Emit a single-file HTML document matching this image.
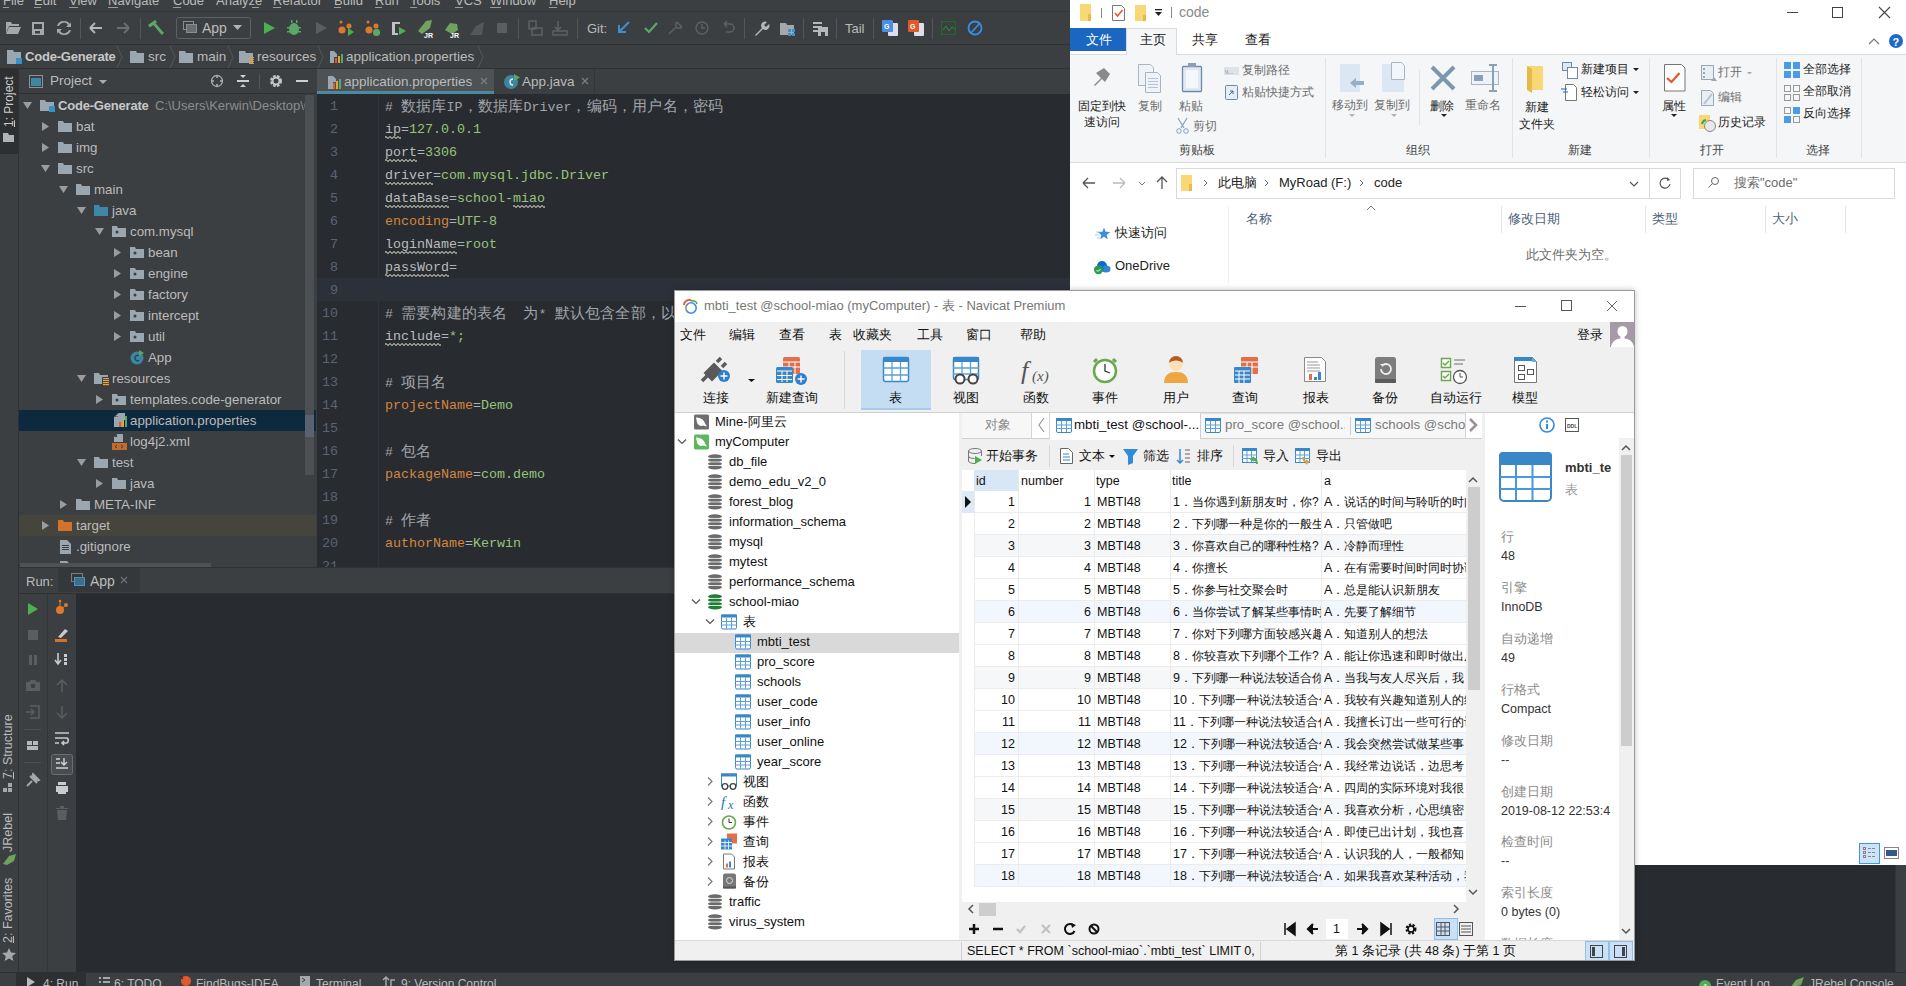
<!DOCTYPE html>
<html><head><meta charset="utf-8">
<style>
*{box-sizing:border-box}
html,body{margin:0;padding:0;width:1906px;height:986px;overflow:hidden;background:#3c3f41;font-family:"Liberation Sans",sans-serif;}
.a{position:absolute}
.t{position:absolute;white-space:pre;line-height:1}
/* IntelliJ */
#ij{position:absolute;left:0;top:0;width:1906px;height:986px;background:#3c3f41;color:#bbbbbb;font-size:13px}
.mono{font-family:"Liberation Mono",monospace}
.c12{font-size:12px}
.cj{font-size:15px;letter-spacing:0.2px}
.wv{background-image:linear-gradient(45deg,transparent 35%,#8e9188 35%,#8e9188 65%,transparent 65%),linear-gradient(135deg,transparent 35%,#8e9188 35%,#8e9188 65%,transparent 65%);background-size:4px 3px;background-repeat:repeat-x;background-position:0 14px,2px 14px;padding-bottom:2px}
</style></head><body>
<div id="ij">
<!-- menu -->
<div class="a" style="left:0;top:0;width:1070px;height:12px;background:#3c3f41;border-bottom:1px solid #333537"></div>
<div class="a" style="left:3px;top:-6px;font-size:13px;color:#bbb;line-height:13px"><span style="position:absolute;left:0px;top:0;white-space:pre">File</span><span style="position:absolute;left:31px;top:0;white-space:pre">Edit</span><span style="position:absolute;left:66px;top:0;white-space:pre">View</span><span style="position:absolute;left:105px;top:0;white-space:pre">Navigate</span><span style="position:absolute;left:170px;top:0;white-space:pre">Code</span><span style="position:absolute;left:213px;top:0;white-space:pre">Analyze</span><span style="position:absolute;left:270px;top:0;white-space:pre">Refactor</span><span style="position:absolute;left:331px;top:0;white-space:pre">Build</span><span style="position:absolute;left:372px;top:0;white-space:pre">Run</span><span style="position:absolute;left:407px;top:0;white-space:pre">Tools</span><span style="position:absolute;left:452px;top:0;white-space:pre">VCS</span><span style="position:absolute;left:487px;top:0;white-space:pre">Window</span><span style="position:absolute;left:546px;top:0;white-space:pre">Help</span></div>
<div class="a" style="left:3px;top:7px;width:1px;height:1px"><span class="a" style="left:0px;top:0;width:6px;height:1px;background:#9a9a9a"></span><span class="a" style="left:31px;top:0;width:7px;height:1px;background:#9a9a9a"></span><span class="a" style="left:66px;top:0;width:9px;height:1px;background:#9a9a9a"></span><span class="a" style="left:105px;top:0;width:10px;height:1px;background:#9a9a9a"></span><span class="a" style="left:170px;top:0;width:8px;height:1px;background:#9a9a9a"></span><span class="a" style="left:249px;top:0;width:7px;height:1px;background:#9a9a9a"></span><span class="a" style="left:270px;top:0;width:8px;height:1px;background:#9a9a9a"></span><span class="a" style="left:331px;top:0;width:7px;height:1px;background:#9a9a9a"></span><span class="a" style="left:372px;top:0;width:7px;height:1px;background:#9a9a9a"></span><span class="a" style="left:407px;top:0;width:7px;height:1px;background:#9a9a9a"></span><span class="a" style="left:452px;top:0;width:8px;height:1px;background:#9a9a9a"></span><span class="a" style="left:487px;top:0;width:11px;height:1px;background:#9a9a9a"></span><span class="a" style="left:546px;top:0;width:8px;height:1px;background:#9a9a9a"></span></div>
<!-- toolbar -->
<div class="a" style="left:0;top:13px;width:1070px;height:32px;background:#3c3f41;border-bottom:1px solid #2f3133"></div>
<svg class="a" style="left:0;top:13px" width="1070" height="31" viewBox="0 13 1070 31">
 <g fill="#a4a8ab">
  <path d="M6 22h5l1 2h7v2H9l-3 7z M9 27h12l-3 7H6z"/>
  <path d="M32 22h12v13H32z M34 24v5h8v-5z M35 31v2.5h5v-2.5z" fill-rule="evenodd"/>
  <path d="M64 21a7 7 0 0 1 6 3l1-2v5h-5l2-2a5 5 0 0 0-9 1h-2a7 7 0 0 1 7-5z M64 35a7 7 0 0 1-6-3l-1 2v-5h5l-2 2a5 5 0 0 0 9-1h2a7 7 0 0 1-7 5z"/>
 </g>
 <rect x="80" y="18" width="1" height="21" fill="#555"/>
 <path d="M90 28h12M90 28l5-5M90 28l5 5" stroke="#b5b8ba" stroke-width="1.8" fill="none"/>
 <path d="M117 28h12M129 28l-5-5M129 28l-5 5" stroke="#6c6f71" stroke-width="1.8" fill="none"/>
 <rect x="140" y="18" width="1" height="21" fill="#555"/>
 <path d="M148 25l7-5 2 2-1.5 1.2 8.5 9.8-2.2 2-8.5-10-3.3 2.6z" fill="#59a869"/>
 <rect x="176.5" y="17.5" width="74" height="21" rx="2" fill="none" stroke="#5e6163"/>
 <g fill="none" stroke="#8a8d90"><rect x="183.5" y="21.5" width="10" height="8"/><rect x="186.5" y="24.5" width="10" height="8" fill="#6b6e70"/></g>
 <path d="M233 25h9l-4.5 5z" fill="#b0b3b5"/><text x="202" y="33" font-size="14" fill="#bbb" font-family="Liberation Sans">App</text>
 <path d="M264 22l11 6-11 6z" fill="#4caf50"/>
 <g fill="#59a869"><ellipse cx="294" cy="29" rx="5" ry="6"/><rect x="287" y="27" width="14" height="1.5"/><rect x="287" y="31" width="14" height="1.5"/><rect x="291" y="20" width="1.5" height="3"/><rect x="296" y="20" width="1.5" height="3"/></g>
 <path d="M316 22l11 6-11 6z" fill="#5b5e60"/>
 <g fill="#e0782c"><circle cx="342" cy="30" r="3.5"/><circle cx="349" cy="26" r="2.5"/><circle cx="341" cy="22" r="1.5"/></g><path d="M348 28l6 4-6 4z" fill="#4caf50"/>
 <g fill="#e0782c"><circle cx="369" cy="30" r="3.5"/><circle cx="376" cy="26" r="2.5"/><circle cx="368" cy="22" r="1.5"/></g><rect x="373" y="29" width="7" height="7" rx="3" fill="#59a869"/>
 <path d="M392 22h8v2h-5v9h3v2h-6z" fill="#bfc2c4"/><path d="M399 27l7 4-7 4z" fill="#4caf50"/>
 <path d="M418 31l8-10 6-1-2 8-8 6z" fill="#6fa35b"/><text x="424" y="38" font-size="7" font-weight="bold" fill="#fff">JR</text>
 <path d="M445 30l5-7 7 1 1 6-6 4z" fill="#6fa35b"/><text x="450" y="38" font-size="7" font-weight="bold" fill="#fff">JR</text>
 <path d="M470 35l6-9 8-4-2 13z" fill="#555758"/>
 <rect x="497" y="23" width="10" height="10" fill="#5b5e60"/>
 <rect x="518" y="18" width="1" height="21" fill="#555"/>
 <path d="M529 21h7v8h-7z M532 28h10v7h-10z" fill="none" stroke="#5e6163" stroke-width="1.5"/>
 <path d="M558 21v9M555 27l3 3 3-3M553 31h14v4h-14z" stroke="#5e6163" stroke-width="1.5" fill="none"/>
 <rect x="577" y="18" width="1" height="21" fill="#555"/>
 <text x="587" y="33" font-size="13" fill="#bbb" font-family="Liberation Sans">Git:</text>
 <path d="M629 22l-10 10M619 25v7h7" stroke="#3d8fd1" stroke-width="2" fill="none"/>
 <path d="M645 28l4 4 8-9" stroke="#59a869" stroke-width="2.2" fill="none"/>
 <path d="M669 34l6-6M677 22l5 5M676 28h6M676 22v6" stroke="#5e6163" stroke-width="1.5" fill="none"/>
 <circle cx="702" cy="28" r="6" fill="none" stroke="#5e6163" stroke-width="1.5"/><path d="M702 24v4h3" stroke="#5e6163" stroke-width="1.5" fill="none"/>
 <path d="M724 24h6a4 4 0 0 1 0 8h-4M724 24l3-3M724 24l3 3" stroke="#5e6163" stroke-width="1.5" fill="none"/>
 <rect x="744" y="18" width="1" height="21" fill="#555"/>
 <path d="M755 35l7-7a4 4 0 0 1 5-6l-3 3 2 2 3-3a4 4 0 0 1-6 5l-7 7z" fill="#b5b8ba"/>
 <path d="M780 23h6l1 2h7v10h-14z" fill="#a4a8ab"/><g fill="#3d8fd1"><rect x="788" y="29" width="3" height="3"/><rect x="792" y="29" width="3" height="3"/><rect x="788" y="33" width="3" height="3"/><rect x="792" y="33" width="3" height="3"/></g>
 <rect x="803" y="18" width="1" height="21" fill="#555"/>
 <g fill="#b5b8ba"><rect x="813" y="22" width="9" height="2"/><rect x="813" y="26" width="9" height="2"/><rect x="813" y="30" width="9" height="2"/><rect x="818" y="27" width="10" height="9"/></g><rect x="821" y="32" width="4" height="4" fill="#3c3f41"/>
 <rect x="836" y="18" width="1" height="21" fill="#555"/>
 <text x="845" y="33" font-size="13" fill="#bbb" font-family="Liberation Sans">Tail</text>
 <rect x="873" y="18" width="1" height="21" fill="#555"/>
 <rect x="888" y="23" width="10" height="13" fill="#dde" rx="1"/><rect x="882" y="20" width="11" height="12" fill="#4a90e2" rx="1"/><text x="884" y="29" font-size="7" fill="#fff" font-weight="bold">G</text>
 <rect x="914" y="23" width="10" height="13" fill="#dde" rx="1"/><rect x="908" y="20" width="11" height="12" fill="#e2582c" rx="1"/><text x="910" y="29" font-size="7" fill="#fff" font-weight="bold">G</text>
 <rect x="932" y="18" width="1" height="21" fill="#555"/>
 <rect x="941.5" y="21.5" width="14" height="13" fill="none" stroke="#1f6b2a"/><path d="M943 30l3-4 3 5 3-4 3 2" stroke="#2d8a3a" fill="none"/>
 <circle cx="975" cy="28" r="6.5" fill="none" stroke="#3a8ee6" stroke-width="1.8"/><path d="M971 33l9-10" stroke="#3a8ee6" stroke-width="1.8"/>
</svg>
<!-- nav bar -->
<div class="a" style="left:0;top:45px;width:1070px;height:24px;background:#3c3f41;border-bottom:1px solid #2f3133"></div>
<svg class="a" style="left:0;top:45px" width="1070" height="24" viewBox="0 45 1070 24">
 <g fill="#9aa7b0"><path d="M7 50h6l1 2h7v12H7z"/></g><rect x="16" y="58" width="6" height="6" fill="#3592c4"/>
 <path d="M117 46l5 11-5 11" stroke="#555" fill="none"/>
 <path d="M130 51h6l1 2h7v10h-14z" fill="#9aa7b0"/>
 <path d="M170 46l5 11-5 11" stroke="#555" fill="none"/>
 <path d="M179 51h6l1 2h7v10h-14z" fill="#9aa7b0"/>
 <path d="M228 46l5 11-5 11" stroke="#555" fill="none"/>
 <path d="M239 51h6l1 2h7v10h-14z" fill="#9aa7b0"/><g fill="#e3a23a"><rect x="249" y="57" width="5" height="1"/><rect x="249" y="59" width="5" height="1"/><rect x="249" y="61" width="5" height="1"/><rect x="249" y="63" width="5" height="1"/></g>
 <path d="M318 46l5 11-5 11" stroke="#555" fill="none"/>
 <path d="M330 51h4v12h-4z M334 51l3 3h-3z M334 54h3v3h-3z" fill="#9aa7b0"/><rect x="335" y="58" width="2" height="5" fill="#e2582c"/><rect x="338" y="56" width="2" height="7" fill="#e3a23a"/><rect x="341" y="54" width="2" height="9" fill="#59a869"/>
 <path d="M478 46l5 11-5 11" stroke="#555" fill="none"/>
</svg>
<div class="t" style="left:25px;top:50px;font-size:13px;font-weight:bold;color:#c8c8c8;letter-spacing:-0.2px">Code-Generate</div>
<div class="t" style="left:148px;top:50px;font-size:13.5px;color:#bbb">src</div>
<div class="t" style="left:197px;top:50px;font-size:13.5px;color:#bbb">main</div>
<div class="t" style="left:257px;top:50px;font-size:13.5px;color:#bbb">resources</div>
<div class="t" style="left:346px;top:50px;font-size:13.5px;color:#bbb">application.properties</div>

<!-- IJ_TOOLBAR -->
<!-- IJ_NAV -->
<!-- PROJ_START --><div class="a" style="left:0;top:69px;width:19px;height:903px;background:#3c3f41;border-right:1px solid #2f3133"></div>
<div class="a" style="left:0;top:69px;width:18px;height:85px;background:#2d2f30"></div>
<div class="a" style="left:3px;top:127px;font-size:12px;color:#ccc;transform-origin:0 0;transform:rotate(-90deg);white-space:pre;line-height:13px"><span style="text-decoration:underline">1</span>: Project</div>
<svg class="a" style="left:3px;top:133px" width="12" height="10"><path d="M0 0h5l1 2h5v7H0z" fill="#aeb3b7"/></svg>
<div class="a" style="left:19px;top:69px;width:297px;height:25px;background:#3c3f41;border-bottom:1px solid #2f3133"></div>
<svg class="a" style="left:19px;top:69px" width="297" height="25" viewBox="19 69 297 25"><rect x="29.5" y="75.5" width="13" height="12" fill="none" stroke="#8d9194"/><rect x="31" y="78" width="10" height="8" fill="#3f87a6"/><path d="M99 80h8l-4 4z" fill="#aaa"/><circle cx="217" cy="81" r="5.5" fill="none" stroke="#a9acaf" stroke-width="1.3"/><rect x="216.2" y="75" width="1.6" height="3" fill="#a9acaf"/><rect x="216.2" y="84" width="1.6" height="3" fill="#a9acaf"/><rect x="211" y="80.2" width="3" height="1.6" fill="#a9acaf"/><rect x="220" y="80.2" width="3" height="1.6" fill="#a9acaf"/><rect x="237" y="80" width="12" height="2" fill="#cdd0d2"/><path d="M240 75h6l-3 3z M240 87h6l-3-3z" fill="#cdd0d2"/><rect x="259" y="74" width="1" height="15" fill="#555"/><circle cx="276" cy="81" r="4.5" fill="none" stroke="#c4c7c9" stroke-width="3" stroke-dasharray="2.4 1.2"/><circle cx="276" cy="81" r="3.5" fill="none" stroke="#c4c7c9" stroke-width="2"/><rect x="296" y="80" width="12" height="2" fill="#cdd0d2"/></svg>
<div class="t" style="left:50px;top:74px;font-size:13.5px;color:#bbb">Project</div>
<div class="a" style="left:19px;top:95px;width:297px;height:472px;background:#3c3f41;overflow:hidden">
<div class="a" style="left:0;top:315px;width:297px;height:21px;background:#0d293e"></div>
<div class="a" style="left:0;top:420px;width:297px;height:21px;background:#45443d"></div>
<svg class="a" style="left:0;top:0" width="297" height="490"><path d="M4 7h9l-4.5 7z" fill="#9a9c9e"/><path d="M21 5h5l1 2h8v9h-14z" fill="#9aa7b0"/><rect x="30" y="11" width="6" height="6" fill="#3592c4"/><path d="M23 27l7 4.5-7 4.5z" fill="#9a9c9e"/><path d="M39 26h5l1 2h8v9h-14z" fill="#9aa7b0"/><path d="M23 48l7 4.5-7 4.5z" fill="#9a9c9e"/><path d="M39 47h5l1 2h8v9h-14z" fill="#9aa7b0"/><path d="M22 70h9l-4.5 7z" fill="#9a9c9e"/><path d="M39 68h5l1 2h8v9h-14z" fill="#9aa7b0"/><path d="M40 91h9l-4.5 7z" fill="#9a9c9e"/><path d="M57 89h5l1 2h8v9h-14z" fill="#9aa7b0"/><path d="M58 112h9l-4.5 7z" fill="#9a9c9e"/><path d="M75 110h5l1 2h8v9h-14z" fill="#3f87a6"/><path d="M76 133h9l-4.5 7z" fill="#9a9c9e"/><path d="M93 131h5l1 2h8v9h-14z" fill="#9aa7b0"/><circle cx="98" cy="137" r="1.5" fill="#3c3f41"/><path d="M95 153l7 4.5-7 4.5z" fill="#9a9c9e"/><path d="M111 152h5l1 2h8v9h-14z" fill="#9aa7b0"/><circle cx="116" cy="158" r="1.5" fill="#3c3f41"/><path d="M95 174l7 4.5-7 4.5z" fill="#9a9c9e"/><path d="M111 173h5l1 2h8v9h-14z" fill="#9aa7b0"/><circle cx="116" cy="179" r="1.5" fill="#3c3f41"/><path d="M95 195l7 4.5-7 4.5z" fill="#9a9c9e"/><path d="M111 194h5l1 2h8v9h-14z" fill="#9aa7b0"/><circle cx="116" cy="200" r="1.5" fill="#3c3f41"/><path d="M95 216l7 4.5-7 4.5z" fill="#9a9c9e"/><path d="M111 215h5l1 2h8v9h-14z" fill="#9aa7b0"/><circle cx="116" cy="221" r="1.5" fill="#3c3f41"/><path d="M95 237l7 4.5-7 4.5z" fill="#9a9c9e"/><path d="M111 236h5l1 2h8v9h-14z" fill="#9aa7b0"/><circle cx="116" cy="242" r="1.5" fill="#3c3f41"/><circle cx="118" cy="263" r="6.5" fill="#3e86a0"/><path d="M120 260.5a2.8 2.8 0 1 0 0 5" stroke="#24475a" stroke-width="1.4" fill="none"/><path d="M120 255l5 3-5 3z" fill="#59a869"/><path d="M58 280h9l-4.5 7z" fill="#9a9c9e"/><path d="M75 278h5l1 2h8v9h-14z" fill="#9aa7b0"/><rect x="83" y="282" width="8" height="9" fill="#3c3f41"/><rect x="84" y="283" width="6" height="1.2" fill="#e3a23a"/><rect x="84" y="285" width="6" height="1.2" fill="#e3a23a"/><rect x="84" y="287" width="6" height="1.2" fill="#e3a23a"/><rect x="84" y="289" width="6" height="1.2" fill="#e3a23a"/><path d="M77 300l7 4.5-7 4.5z" fill="#9a9c9e"/><path d="M93 299h5l1 2h8v9h-14z" fill="#9aa7b0"/><circle cx="98" cy="305" r="1.5" fill="#3c3f41"/><path d="M100 318h6v7h-2v7h-9v-10z" fill="#9aa7b0"/><path d="M95 322l4-4v4z" fill="#3c3f41"/><path d="M96 321.5l3.5-3.5v3.5z" fill="#9aa7b0"/><rect x="100" y="327" width="2" height="5" fill="#e2582c"/><rect x="103" y="324" width="2" height="8" fill="#e3a23a"/><rect x="106" y="321" width="2" height="11" fill="#59a869"/><path d="M98 339h6v8h-9v-5z" fill="#9aa7b0"/><path d="M95 342l3-3v3z" fill="#3c3f41"/><rect x="93" y="348" width="15" height="7" fill="#c46a2c"/><path d="M98 350l-2 1.5 2 1.5M102 350l2 1.5-2 1.5" stroke="#3c3f41" fill="none"/><path d="M58 364h9l-4.5 7z" fill="#9a9c9e"/><path d="M75 362h5l1 2h8v9h-14z" fill="#9aa7b0"/><path d="M77 384l7 4.5-7 4.5z" fill="#9a9c9e"/><path d="M93 383h5l1 2h8v9h-14z" fill="#9aa7b0"/><path d="M41 405l7 4.5-7 4.5z" fill="#9a9c9e"/><path d="M57 404h5l1 2h8v9h-14z" fill="#9aa7b0"/><path d="M23 426l7 4.5-7 4.5z" fill="#9a9c9e"/><path d="M39 425h5l1 2h8v9h-14z" fill="#d2732d"/><path d="M41 445h7l4 4v10h-11z" fill="#9aa7b0"/><g fill="#3c3f41"><rect x="43" y="450" width="7" height="1"/><rect x="43" y="452" width="7" height="1"/><rect x="43" y="454" width="7" height="1"/></g><path d="M41 466h7l4 4v10h-11z" fill="#9aa7b0"/><g fill="#3c3f41"><rect x="43" y="471" width="7" height="1"/><rect x="43" y="473" width="7" height="1"/><rect x="43" y="475" width="7" height="1"/></g></svg>
<div class="t" style="left:39px;top:4px;font-size:13px;font-weight:bold;color:#c8c8c8;letter-spacing:-0.2px">Code-Generate</div>
<div class="t" style="left:136px;top:4px;font-size:13px;color:#8c8c8c">C:\Users\Kerwin\Desktop\C</div>
<div class="t" style="left:57px;top:25px;font-size:13.3px;color:#bbb">bat</div>
<div class="t" style="left:57px;top:46px;font-size:13.3px;color:#bbb">img</div>
<div class="t" style="left:57px;top:67px;font-size:13.3px;color:#bbb">src</div>
<div class="t" style="left:75px;top:88px;font-size:13.3px;color:#bbb">main</div>
<div class="t" style="left:93px;top:109px;font-size:13.3px;color:#bbb">java</div>
<div class="t" style="left:111px;top:130px;font-size:13.3px;color:#bbb">com.mysql</div>
<div class="t" style="left:129px;top:151px;font-size:13.3px;color:#bbb">bean</div>
<div class="t" style="left:129px;top:172px;font-size:13.3px;color:#bbb">engine</div>
<div class="t" style="left:129px;top:193px;font-size:13.3px;color:#bbb">factory</div>
<div class="t" style="left:129px;top:214px;font-size:13.3px;color:#bbb">intercept</div>
<div class="t" style="left:129px;top:235px;font-size:13.3px;color:#bbb">util</div>
<div class="t" style="left:129px;top:256px;font-size:13.3px;color:#bbb">App</div>
<div class="t" style="left:93px;top:277px;font-size:13.3px;color:#bbb">resources</div>
<div class="t" style="left:111px;top:298px;font-size:13.3px;color:#bbb">templates.code-generator</div>
<div class="t" style="left:111px;top:319px;font-size:13.3px;color:#bbb">application.properties</div>
<div class="t" style="left:111px;top:340px;font-size:13.3px;color:#bbb">log4j2.xml</div>
<div class="t" style="left:93px;top:361px;font-size:13.3px;color:#bbb">test</div>
<div class="t" style="left:111px;top:382px;font-size:13.3px;color:#bbb">java</div>
<div class="t" style="left:75px;top:403px;font-size:13.3px;color:#bbb">META-INF</div>
<div class="t" style="left:57px;top:424px;font-size:13.3px;color:#bbb">target</div>
<div class="t" style="left:57px;top:445px;font-size:13.3px;color:#bbb">.gitignore</div>
<div class="t" style="left:57px;top:466px;font-size:13.3px;color:#bbb">LICENSE</div>
<div class="a" style="left:286px;top:0;width:9px;height:380px;background:#4d5052;border-radius:0"></div>
<div class="a" style="left:286px;top:320px;width:9px;height:22px;background:#5a6270"></div>
<div class="a" style="left:1px;top:468px;width:191px;height:7px;background:#4f5254"></div>
</div><!-- PROJ_END -->
<!-- ED_START --><div class="a" style="left:317px;top:69px;width:753px;height:25px;background:#3c3f41"></div>
<div class="a" style="left:317px;top:69px;width:177px;height:25px;background:#4e5254"></div>
<div class="a" style="left:317px;top:91px;width:177px;height:3px;background:#4a8aa0"></div>
<div class="a" style="left:594px;top:69px;width:1px;height:25px;background:#333537"></div>
<svg class="a" style="left:317px;top:69px" width="300" height="25" viewBox="317 69 300 25"><path d="M328 76h5v13h-5z M333 76l3 3h-3z M333 79h3v3h-3z" fill="#9aa7b0"/><rect x="333" y="83" width="2" height="6" fill="#e2582c"/><rect x="336" y="81" width="2" height="8" fill="#e3a23a"/><rect x="339" y="79" width="2" height="10" fill="#59a869"/><path d="M481 78l6 6M487 78l-6 6" stroke="#7d8083" stroke-width="1.2"/><circle cx="511" cy="82" r="7" fill="#3e86a0"/><path d="M513 79a3 3 0 1 0 0 6" stroke="#d8eef5" stroke-width="1.4" fill="none"/><path d="M514 74l6 3.5-6 3.5z" fill="#59a869"/><path d="M582 78l6 6M588 78l-6 6" stroke="#7d8083" stroke-width="1.2"/></svg>
<div class="t" style="left:344px;top:75px;font-size:13.5px;color:#bbb">application.properties</div>
<div class="t" style="left:522px;top:75px;font-size:13.5px;color:#bbb">App.java</div>
<div class="a" style="left:317px;top:94px;width:753px;height:473px;background:#282c30;overflow:hidden">
<div class="a" style="left:61px;top:0;width:1px;height:473px;background:#30343c"></div>
<div class="a" style="left:0;top:184px;width:753px;height:23px;background:#2c3038"></div>
<div class="t mono" style="left:0;width:21px;text-align:right;top:6px;font-size:13.33px;color:#5c6370">1</div>
<div class="t mono" style="left:68px;top:6px;font-size:13.33px;color:#a0a4aa"># <span class="cj">数据库</span>IP<span class="cj">，数据库</span>Driver<span class="cj">，编码，用户名，密码</span></div>
<div class="t mono" style="left:0;width:21px;text-align:right;top:29px;font-size:13.33px;color:#5c6370">2</div>
<div class="t mono" style="left:68px;top:29px;font-size:13.33px;color:#98c379"><span class="wv" style="color:#bbbbbb">ip</span><span style="color:#abb2bf">=</span>127.0.0.1</div>
<div class="t mono" style="left:0;width:21px;text-align:right;top:52px;font-size:13.33px;color:#5c6370">3</div>
<div class="t mono" style="left:68px;top:52px;font-size:13.33px;color:#98c379"><span class="wv" style="color:#bbbbbb">port</span><span style="color:#abb2bf">=</span>3306</div>
<div class="t mono" style="left:0;width:21px;text-align:right;top:75px;font-size:13.33px;color:#5c6370">4</div>
<div class="t mono" style="left:68px;top:75px;font-size:13.33px;color:#98c379"><span class="wv" style="color:#bbbbbb">driver</span><span style="color:#abb2bf">=</span>com.mysql.jdbc.Driver</div>
<div class="t mono" style="left:0;width:21px;text-align:right;top:98px;font-size:13.33px;color:#5c6370">5</div>
<div class="t mono" style="left:68px;top:98px;font-size:13.33px;color:#98c379"><span class="wv" style="color:#bbbbbb">dataBase</span><span style="color:#abb2bf">=</span>school-<span class="wv">miao</span></div>
<div class="t mono" style="left:0;width:21px;text-align:right;top:121px;font-size:13.33px;color:#5c6370">6</div>
<div class="t mono" style="left:68px;top:121px;font-size:13.33px;color:#98c379"><span style="color:#d6843f">encoding</span><span style="color:#abb2bf">=</span>UTF-8</div>
<div class="t mono" style="left:0;width:21px;text-align:right;top:144px;font-size:13.33px;color:#5c6370">7</div>
<div class="t mono" style="left:68px;top:144px;font-size:13.33px;color:#98c379"><span class="wv" style="color:#bbbbbb">loginName</span><span style="color:#abb2bf">=</span>root</div>
<div class="t mono" style="left:0;width:21px;text-align:right;top:167px;font-size:13.33px;color:#5c6370">8</div>
<div class="t mono" style="left:68px;top:167px;font-size:13.33px;color:#98c379"><span class="wv" style="color:#bbbbbb">passWord</span><span style="color:#abb2bf">=</span></div>
<div class="t mono" style="left:0;width:21px;text-align:right;top:190px;font-size:13.33px;color:#5c6370">9</div>
<div class="t mono" style="left:0;width:21px;text-align:right;top:213px;font-size:13.33px;color:#5c6370">10</div>
<div class="t mono" style="left:68px;top:213px;font-size:13.33px;color:#a0a4aa"># <span class="cj">需要构建的表名</span>  <span class="cj">为</span>* <span class="cj">默认包含全部，以</span></div>
<div class="t mono" style="left:0;width:21px;text-align:right;top:236px;font-size:13.33px;color:#5c6370">11</div>
<div class="t mono" style="left:68px;top:236px;font-size:13.33px;color:#98c379"><span class="wv" style="color:#bbbbbb">include</span><span style="color:#abb2bf">=</span>*;</div>
<div class="t mono" style="left:0;width:21px;text-align:right;top:259px;font-size:13.33px;color:#5c6370">12</div>
<div class="t mono" style="left:0;width:21px;text-align:right;top:282px;font-size:13.33px;color:#5c6370">13</div>
<div class="t mono" style="left:68px;top:282px;font-size:13.33px;color:#a0a4aa"># <span class="cj">项目名</span></div>
<div class="t mono" style="left:0;width:21px;text-align:right;top:305px;font-size:13.33px;color:#5c6370">14</div>
<div class="t mono" style="left:68px;top:305px;font-size:13.33px;color:#98c379"><span style="color:#d6843f">projectName</span><span style="color:#abb2bf">=</span>Demo</div>
<div class="t mono" style="left:0;width:21px;text-align:right;top:328px;font-size:13.33px;color:#5c6370">15</div>
<div class="t mono" style="left:0;width:21px;text-align:right;top:351px;font-size:13.33px;color:#5c6370">16</div>
<div class="t mono" style="left:68px;top:351px;font-size:13.33px;color:#a0a4aa"># <span class="cj">包名</span></div>
<div class="t mono" style="left:0;width:21px;text-align:right;top:374px;font-size:13.33px;color:#5c6370">17</div>
<div class="t mono" style="left:68px;top:374px;font-size:13.33px;color:#98c379"><span style="color:#d6843f">packageName</span><span style="color:#abb2bf">=</span>com.demo</div>
<div class="t mono" style="left:0;width:21px;text-align:right;top:397px;font-size:13.33px;color:#5c6370">18</div>
<div class="t mono" style="left:0;width:21px;text-align:right;top:420px;font-size:13.33px;color:#5c6370">19</div>
<div class="t mono" style="left:68px;top:420px;font-size:13.33px;color:#a0a4aa"># <span class="cj">作者</span></div>
<div class="t mono" style="left:0;width:21px;text-align:right;top:443px;font-size:13.33px;color:#5c6370">20</div>
<div class="t mono" style="left:68px;top:443px;font-size:13.33px;color:#98c379"><span style="color:#d6843f">authorName</span><span style="color:#abb2bf">=</span>Kerwin</div>
<div class="t mono" style="left:0;width:21px;text-align:right;top:466px;font-size:13.33px;color:#5c6370">21</div>
</div><!-- ED_END -->
<!-- RUN_START --><div class="a" style="left:19px;top:567px;width:1876px;height:27px;background:#3c3f41;border-top:1px solid #2f3133;border-bottom:1px solid #2f3133"></div>
<div class="a" style="left:58px;top:568px;width:82px;height:24px;background:#35383a"></div>
<div class="t" style="left:26px;top:575px;font-size:13px;color:#bbb">Run:</div>
<div class="t" style="left:90px;top:574px;font-size:14px;color:#bbb">App</div>
<svg class="a" style="left:58px;top:568px" width="82" height="24" viewBox="58 568 82 24"><rect x="71.5" y="573.5" width="11" height="8" fill="none" stroke="#7b7e81"/><rect x="74.5" y="577.5" width="10" height="8" fill="#3c6e8f" stroke="#4a90c0"/><path d="M121 577l6 6M127 577l-6 6" stroke="#6f7275" stroke-width="1.2"/></svg>
<div class="a" style="left:19px;top:594px;width:57px;height:378px;background:#3c3f41"></div>
<div class="a" style="left:47px;top:594px;width:1px;height:378px;background:#333537"></div>
<div class="a" style="left:76px;top:594px;width:1819px;height:378px;background:#282c30"></div>
<div class="a" style="left:1895px;top:0;width:11px;height:972px;background:#3c3f41;border-left:1px solid #333537"></div>
<div class="a" style="left:0;top:972px;width:1906px;height:14px;background:#3c3f41;border-top:1px solid #2f3133"></div>
<div class="a" style="left:16px;top:973px;width:70px;height:13px;background:#2d2f30"></div>
<svg class="a" style="left:0;top:593px" width="1906" height="393" viewBox="0 593 1906 393"><path d="M28 603l10 6-10 6z" fill="#4caf50"/><rect x="28" y="630" width="10" height="10" fill="#5b5e60"/><rect x="29" y="655" width="3" height="10" fill="#5b5e60"/><rect x="34" y="655" width="3" height="10" fill="#5b5e60"/><path d="M26 682h3l2-2h4l2 2h3v9h-14z" fill="#5b5e60"/><circle cx="33" cy="686" r="2.3" fill="#3c3f41"/><path d="M30 706h9v12h-9M26 712h8M31 709l3 3-3 3" stroke="#5b5e60" stroke-width="1.5" fill="none"/><rect x="24" y="729" width="17" height="1" fill="#4f5254"/><rect x="27" y="741" width="5" height="4" fill="#b5b8ba"/><rect x="33" y="741" width="5" height="4" fill="#b5b8ba"/><rect x="27" y="746" width="11" height="4" fill="#b5b8ba"/><rect x="24" y="762" width="17" height="1" fill="#4f5254"/><path d="M27 786l5-5M30 776l7 7M33 774l6 6-3 1-4-4z" stroke="#a4a8ab" stroke-width="1.8" fill="#a4a8ab"/><circle cx="60" cy="610" r="4" fill="#e0782c"/><circle cx="66" cy="605" r="2" fill="#e0782c"/><circle cx="60" cy="601" r="1.3" fill="#e0782c"/><path d="M60 610l6-5M60 610v-8" stroke="#e0782c"/><rect x="55" y="639" width="12" height="3" fill="#d2732d"/><path d="M58 637l7-8 3 2-7 7z" fill="#c8cbcd"/><path d="M58 653v11M55 660l3 4 3-4" stroke="#c8cbcd" stroke-width="1.6" fill="none"/><rect x="64" y="654" width="3" height="3" fill="#c8cbcd"/><rect x="64" y="658" width="3" height="3" fill="#c8cbcd"/><rect x="64" y="662" width="3" height="3" fill="#c8cbcd"/><path d="M62 680v12M57 685l5-5 5 5" stroke="#5b5e60" stroke-width="1.5" fill="none"/><path d="M62 706v12M57 713l5 5 5-5" stroke="#5b5e60" stroke-width="1.5" fill="none"/><path d="M55 733h14M55 738h12a3 3 0 0 1 0 5h-4M64 741l-2 2 2 2M55 743h4" stroke="#c8cbcd" stroke-width="1.6" fill="none"/><rect x="51.5" y="754.5" width="21" height="20" rx="2" fill="#4a4d50" stroke="#6b6e71"/><path d="M56 759h4M56 763h4M56 768h12M64 758v7M61 762l3 3 3-3" stroke="#d0d3d5" stroke-width="1.4" fill="none"/><path d="M56 786h12v6h-12z M58 782h8v3h-8z" fill="#c8cbcd"/><rect x="58" y="790" width="8" height="4" fill="#c8cbcd"/><path d="M57 810h10l-1 10h-8z M56 808h12v1h-12z M60 806h4v2h-4z" fill="#5b5e60"/><rect x="3" y="788" width="4" height="4" fill="#a4a8ab"/><rect x="8" y="783" width="4" height="4" fill="#a4a8ab"/><rect x="8" y="788" width="4" height="4" fill="#a4a8ab"/><path d="M3 864l6-8 7-2-2 7-7 4z" fill="#6fa35b"/><path d="M9 948l2 4.5 5 .5-3.8 3.2 1.2 4.8-4.4-2.6-4.4 2.6 1.2-4.8-3.8-3.2 5-.5z" fill="#a4a8ab"/><path d="M27 977l8 5-8 5z" fill="#bbb"/><g fill="#a4a8ab"><rect x="99" y="977" width="2" height="2"/><rect x="103" y="977" width="7" height="2"/><rect x="99" y="981" width="2" height="2"/><rect x="103" y="981" width="7" height="2"/></g><circle cx="186" cy="981" r="5" fill="#e2582c"/><path d="M180 976l3 3" stroke="#222"/><rect x="300" y="976" width="10" height="10" fill="#a4a8ab"/><path d="M302 978l3 2-3 2" stroke="#3c3f41" fill="none"/><path d="M386 986v-9M383 980l3-3 3 3M391 986v-6h4" stroke="#a4a8ab" stroke-width="1.5" fill="none"/><circle cx="1705" cy="986" r="6" fill="#4caf50"/><text x="1703" y="990" font-size="9" fill="#fff" font-family="Liberation Sans">1</text><path d="M1790 988l6-8 8-3-3 8z" fill="#6fa35b"/></svg>
<div class="t" style="left:1px;top:779px;font-size:12.5px;color:#bbb;transform-origin:0 0;transform:rotate(-90deg);line-height:14px"><span style="text-decoration:underline">7</span>: Structure</div>
<div class="t" style="left:1px;top:852px;font-size:12.5px;color:#bbb;transform-origin:0 0;transform:rotate(-90deg);line-height:14px">JRebel</div>
<div class="t" style="left:1px;top:943px;font-size:12.5px;color:#bbb;transform-origin:0 0;transform:rotate(-90deg);line-height:14px"><span style="text-decoration:underline">2</span>: Favorites</div>
<div class="t" style="left:43px;top:978px;font-size:12px;color:#bbb">4: Run</div>
<div class="t" style="left:114px;top:978px;font-size:12px;color:#bbb">6: TODO</div>
<div class="t" style="left:196px;top:978px;font-size:12px;color:#bbb">FindBugs-IDEA</div>
<div class="t" style="left:316px;top:978px;font-size:12px;color:#bbb">Terminal</div>
<div class="t" style="left:401px;top:978px;font-size:12px;color:#bbb">9: Version Control</div>
<div class="t" style="left:1716px;top:978px;font-size:12px;color:#bbb">Event Log</div>
<div class="t" style="left:1809px;top:978px;font-size:12px;color:#bbb">JRebel Console</div><!-- RUN_END -->
</div>
<!-- EX_START --><div id="ex" class="a" style="left:1070px;top:0;width:836px;height:865px;background:#fff;color:#222;font-size:12px;overflow:hidden">
<!-- title bar -->
<svg class="a" style="left:0;top:0" width="836" height="54" viewBox="1070 0 836 54">
 <path d="M1080 4h11v17h-11z" fill="#f8d775"/><path d="M1088 14h3v7h-3z" fill="#e8b84a"/>
 <rect x="1101" y="8" width="1" height="10" fill="#888"/>
 <path d="M1112.5 5.5h9l3 3v12h-12z" fill="#fff" stroke="#777"/><path d="M1115 13l2.5 3 5-6" stroke="#e2582c" stroke-width="1.5" fill="none"/>
 <path d="M1135 5h11v16h-11z" fill="#f8d775"/><path d="M1143 15h3v6h-3z" fill="#e8b84a"/>
 <rect x="1155" y="9" width="7" height="1.3" fill="#222"/><path d="M1155 12h7l-3.5 4z" fill="#222"/>
 <rect x="1171" y="7" width="1" height="11" fill="#888"/>
 <rect x="1787" y="12" width="11" height="1" fill="#444"/>
 <rect x="1832.5" y="7.5" width="10" height="10" fill="none" stroke="#444"/>
 <path d="M1879 7l11 11M1890 7l-11 11" stroke="#444" stroke-width="1.1"/>
 <path d="M1869 44l5-5 5 5" stroke="#777" fill="none" stroke-width="1.2"/>
 <circle cx="1896" cy="41" r="7" fill="#1e6ac6"/><text x="1892.5" y="45.5" font-size="11" font-weight="bold" fill="#fff" font-family="Liberation Sans">?</text>
</svg>
<div class="t" style="left:109px;top:5px;font-size:14px;color:#8a8a8a">code</div>
<!-- ribbon tabs -->
<div class="a" style="left:0;top:28px;width:56px;height:23px;background:#1a66c0"></div>
<div class="t" style="left:16px;top:34px;font-size:12.5px;color:#fff">文件</div>
<div class="a" style="left:56px;top:28px;width:51px;height:27px;background:#f5f6f7;border:1px solid #dadbdc;border-bottom:none"></div>
<div class="t" style="left:70px;top:34px;font-size:12.5px;color:#222">主页</div>
<div class="t" style="left:122px;top:34px;font-size:12.5px;color:#222">共享</div>
<div class="t" style="left:175px;top:34px;font-size:12.5px;color:#222">查看</div>
<!-- ribbon body -->
<div class="a" style="left:0;top:54px;width:836px;height:109px;background:#f5f6f7;border-top:1px solid #dadbdc;border-bottom:1px solid #dadbdc"></div>
<div class="a" style="left:57px;top:54px;width:49px;height:1px;background:#f5f6f7"></div>
<div class="a" style="left:255px;top:58px;width:1px;height:100px;background:#e2e3e4"></div>
<div class="a" style="left:442px;top:58px;width:1px;height:100px;background:#e2e3e4"></div>
<div class="a" style="left:579px;top:58px;width:1px;height:100px;background:#e2e3e4"></div>
<div class="a" style="left:706px;top:58px;width:1px;height:100px;background:#e2e3e4"></div>
<div class="a" style="left:791px;top:58px;width:1px;height:100px;background:#e2e3e4"></div>
<div class="a" style="left:349px;top:70px;width:1px;height:55px;background:#e2e3e4"></div>
<svg class="a" style="left:0;top:54px" width="836" height="110" viewBox="1070 54 836 110">
 <!-- pin -->
 <path d="M1096 73l8-5 6 6-5 8-3-3-7 7-1-1 7-7z" fill="#8a8a8a"/>
 <!-- copy -->
 <path d="M1138.5 64.5h12l3 3v18h-15z" fill="#eef3fa" stroke="#aab5c3"/><path d="M1145.5 72.5h12l3 3v17h-15z" fill="#eef3fa" stroke="#aab5c3"/>
 <g fill="#b7c3d1"><rect x="1148" y="78" width="10" height="1"/><rect x="1148" y="81" width="10" height="1"/><rect x="1148" y="84" width="10" height="1"/><rect x="1148" y="87" width="10" height="1"/></g>
 <!-- paste -->
 <rect x="1182.5" y="66.5" width="19" height="25" rx="1" fill="#dfe8f3" stroke="#6f8aa8" stroke-width="1.3"/><rect x="1186" y="70" width="12" height="18" fill="#f4f7fb"/><rect x="1188" y="63" width="8" height="4" fill="#8aa0b8"/>
 <!-- scissors -->
 <path d="M1178 118l6 10M1187 118l-6 10" stroke="#8aa0b8" stroke-width="1.2"/><circle cx="1179" cy="131" r="2.3" fill="none" stroke="#8aa0b8"/><circle cx="1186" cy="131" r="2.3" fill="none" stroke="#8aa0b8"/>
 <!-- copy path -->
 <rect x="1224" y="67" width="15" height="8" fill="#dfe3e8"/><text x="1225" y="74" font-size="6" fill="#6d7e92" font-family="Liberation Sans">\\...</text>
 <!-- paste shortcut -->
 <rect x="1225.5" y="85.5" width="12" height="14" rx="1" fill="#e6edf5" stroke="#6f8aa8"/><path d="M1229 95l4-4M1230 91h3v3" stroke="#4b6b8c" fill="none"/>
 <!-- move to -->
 <rect x="1340" y="64" width="20" height="28" fill="#dbe7f3"/><path d="M1350 83l6-5v3h8v4h-8v3z" fill="#97aec6"/>
 <rect x="1382" y="64" width="22" height="28" fill="#dbe7f3"/><path d="M1391.5 62.5h10l3 3v14h-13z" fill="#f2f5f9" stroke="#aab5c3"/>
 <path d="M1349 114h6l-3 3z M1391 114h6l-3 3z" fill="#a8b4bf"/>
 <!-- delete X -->
 <path d="M1432 67l22 22M1454 67l-22 22" stroke="#7d97b1" stroke-width="4"/>
 <path d="M1441 114h6l-3 3z" fill="#222"/>
 <!-- rename -->
 <rect x="1471.5" y="71.5" width="27" height="13" fill="#eef3fa" stroke="#aab5c3"/><rect x="1474" y="75" width="9" height="6" fill="#8aa0b8"/><path d="M1489 65h8M1493 65v26M1489 91h8" stroke="#8aa0b8" stroke-width="2"/>
 <!-- new folder -->
 <path d="M1527 66h16v24h-16z" fill="#f8d775"/><path d="M1527 66l5 3v24l-5-3z" fill="#e8b84a"/>
 <!-- new item -->
 <rect x="1562.5" y="62.5" width="9" height="8" fill="#dfe8f3" stroke="#6f8aa8"/><rect x="1567.5" y="67.5" width="10" height="11" fill="#fff" stroke="#6f8aa8"/>
 <path d="M1633 68h6l-3 3z M1633 91h6l-3 3z" fill="#222"/>
 <!-- easy access -->
 <path d="M1565.5 84.5h8l3 3v13h-11z" fill="#fff" stroke="#777"/><path d="M1561 89h6M1563 92h5" stroke="#1e6ac6" stroke-width="1.2"/>
 <!-- properties -->
 <path d="M1664.5 64.5h17l3.5 3.5v23h-20.5z" fill="#fff" stroke="#777"/><path d="M1667 78l4.5 4 8-9" stroke="#e2582c" stroke-width="2.2" fill="none"/>
 <path d="M1671 114h6l-3 3z" fill="#222"/>
 <!-- open -->
 <rect x="1701.5" y="65.5" width="12" height="14" fill="#e9eef4" stroke="#9aa8b6"/><g fill="#9aa8b6"><rect x="1703" y="68" width="2" height="2"/><rect x="1703" y="72" width="2" height="2"/><rect x="1703" y="76" width="2" height="2"/></g><path d="M1711 81l3-4 3 4z" fill="#9aa8b6"/>
 <path d="M1747 72h5l-2.5 2.5z" fill="#aaa"/>
 <path d="M1701.5 90.5h9l3 3v12h-12z" fill="#e9eef4" stroke="#9aa8b6"/><path d="M1704 104l8-10" stroke="#b6c3d0" stroke-width="2"/>
 <rect x="1699" y="115" width="11" height="14" fill="#f8d775"/><circle cx="1710" cy="126" r="5.5" fill="#e8e8e8" stroke="#888"/><path d="M1702 124a5 5 0 0 1 4-4" stroke="#3aa655" stroke-width="2" fill="none"/>
 <!-- select all -->
 <g fill="#4a9be8"><rect x="1784" y="62" width="7" height="7"/><rect x="1793" y="62" width="7" height="7"/><rect x="1784" y="71" width="7" height="7"/><rect x="1793" y="71" width="7" height="7"/></g>
 <g fill="none" stroke="#999"><rect x="1784.5" y="85.5" width="6" height="6"/><rect x="1793.5" y="85.5" width="6" height="6"/><rect x="1784.5" y="94.5" width="6" height="6"/><rect x="1793.5" y="94.5" width="6" height="6"/></g>
 <g fill="none" stroke="#999"><rect x="1784.5" y="107.5" width="6" height="6"/><rect x="1793.5" y="116.5" width="6" height="6"/></g><g fill="#4a9be8"><rect x="1793" y="107" width="7" height="7"/><rect x="1784" y="116" width="7" height="7"/></g>
</svg>
<div class="t" style="left:8px;top:98px;font-size:12px;line-height:16px;text-align:center;width:48px">固定到快<br>速访问</div>
<div class="t" style="left:68px;top:100px;font-size:12px;color:#6d6d6d">复制</div>
<div class="t" style="left:109px;top:100px;font-size:12px;color:#6d6d6d">粘贴</div>
<div class="t" style="left:123px;top:120px;font-size:12px;color:#6d6d6d">剪切</div>
<div class="t" style="left:172px;top:64px;font-size:12px;color:#6d6d6d">复制路径</div>
<div class="t" style="left:172px;top:86px;font-size:12px;color:#6d6d6d">粘贴快捷方式</div>
<div class="t" style="left:109px;top:144px;font-size:12px;color:#444">剪贴板</div>
<div class="t" style="left:262px;top:99px;font-size:12px;color:#6d6d6d">移动到</div>
<div class="t" style="left:304px;top:99px;font-size:12px;color:#6d6d6d">复制到</div>
<div class="t" style="left:360px;top:100px;font-size:12px;color:#222">删除</div>
<div class="t" style="left:395px;top:99px;font-size:12px;color:#6d6d6d">重命名</div>
<div class="t" style="left:336px;top:144px;font-size:12px;color:#444">组织</div>
<div class="t" style="left:455px;top:99px;font-size:12px;line-height:17px;text-align:center;width:24px">新建<br><span style="position:relative;left:-6px">文件夹</span></div>
<div class="t" style="left:511px;top:63px;font-size:12px">新建项目</div>
<div class="t" style="left:511px;top:86px;font-size:12px">轻松访问</div>
<div class="t" style="left:498px;top:144px;font-size:12px;color:#444">新建</div>
<div class="t" style="left:592px;top:100px;font-size:12px">属性</div>
<div class="t" style="left:648px;top:66px;font-size:12px;color:#6d6d6d">打开</div>
<div class="t" style="left:648px;top:91px;font-size:12px;color:#6d6d6d">编辑</div>
<div class="t" style="left:648px;top:116px;font-size:12px">历史记录</div>
<div class="t" style="left:630px;top:144px;font-size:12px;color:#444">打开</div>
<div class="t" style="left:733px;top:63px;font-size:12px">全部选择</div>
<div class="t" style="left:733px;top:85px;font-size:12px">全部取消</div>
<div class="t" style="left:733px;top:107px;font-size:12px">反向选择</div>
<div class="t" style="left:736px;top:144px;font-size:12px;color:#444">选择</div>
<!-- address row -->
<svg class="a" style="left:0;top:163px" width="836" height="120" viewBox="1070 163 836 120">
 <path d="M1083 183h12M1083 183l5-5M1083 183l5 5" stroke="#555" stroke-width="1.3" fill="none"/>
 <path d="M1113 183h12M1125 183l-5-5M1125 183l-5 5" stroke="#bbb" stroke-width="1.3" fill="none"/>
 <path d="M1139 182l3 3 3-3" stroke="#777" fill="none"/>
 <path d="M1162 177v12M1157 182l5-5 5 5" stroke="#555" stroke-width="1.3" fill="none"/>
 <rect x="1176.5" y="168.5" width="504" height="30" fill="#fff" stroke="#d9d9d9"/>
 <rect x="1649" y="169" width="1" height="29" fill="#d9d9d9"/>
 <path d="M1181 175h11v16h-11z" fill="#f8d775"/><path d="M1189 184h3v7h-3z" fill="#e8b84a"/>
 <path d="M1204 180l3 3-3 3M1265 180l3 3-3 3M1360 180l3 3-3 3" stroke="#666" fill="none"/>
 <path d="M1630 182l4 4 4-4" stroke="#555" fill="none" stroke-width="1.2"/>
 <path d="M1669 180a5 5 0 1 0 1 4" stroke="#555" fill="none" stroke-width="1.2"/><path d="M1667 177l3 3-3 1z" fill="#555"/>
 <rect x="1693.5" y="168.5" width="201" height="30" fill="#fff" stroke="#d9d9d9"/>
 <circle cx="1715" cy="181" r="3.5" fill="none" stroke="#666"/><path d="M1712.5 183.5l-4 4" stroke="#666"/>
 <rect x="1228" y="206" width="1" height="659" fill="#f0f0f0"/>
 <path d="M1367 210l4-4 4 4" stroke="#777" fill="none"/>
 <rect x="1501" y="206" width="1" height="27" fill="#e5e5e5"/><rect x="1645" y="206" width="1" height="27" fill="#e5e5e5"/><rect x="1765" y="206" width="1" height="27" fill="#e5e5e5"/><rect x="1845" y="206" width="1" height="27" fill="#e5e5e5"/>
 <path d="M1104.0 227.5 L1105.6 231.7 L1110.2 232.0 L1106.7 234.9 L1107.8 239.3 L1104.0 236.8 L1100.2 239.3 L1101.3 234.9 L1097.8 232.0 L1102.4 231.7z" fill="#3d8ee0"/><path d="M1096 232h4M1095 235h4M1097 238h3" stroke="#8cc0f0" stroke-width="0.8"/>
 <circle cx="1102" cy="266" r="5" fill="#0f6cc4"/><ellipse cx="1106" cy="269" rx="4.5" ry="3.5" fill="#2b88d8"/><ellipse cx="1099" cy="269" rx="5" ry="3.5" fill="#1a78d0"/><circle cx="1098.5" cy="270" r="4.3" fill="#2e9b48"/><path d="M1096.5 270l1.5 1.5 2.5-2.5" stroke="#fff" fill="none"/>
</svg>
<div class="t" style="left:148px;top:176px;font-size:13px">此电脑</div>
<div class="t" style="left:209px;top:176px;font-size:13px">MyRoad (F:)</div>
<div class="t" style="left:304px;top:176px;font-size:13px">code</div>
<div class="t" style="left:664px;top:176px;font-size:13px;color:#6d6d6d">搜索"code"</div>
<div class="t" style="left:176px;top:213px;font-size:12.5px;color:#4c607a">名称</div>
<div class="t" style="left:438px;top:213px;font-size:12.5px;color:#4c607a">修改日期</div>
<div class="t" style="left:582px;top:213px;font-size:12.5px;color:#4c607a">类型</div>
<div class="t" style="left:702px;top:213px;font-size:12.5px;color:#4c607a">大小</div>
<div class="t" style="left:456px;top:249px;font-size:12.5px;color:#6d6d6d">此文件夹为空。</div>
<div class="t" style="left:45px;top:227px;font-size:12.5px">快速访问</div>
<div class="t" style="left:45px;top:259px;font-size:13px">OneDrive</div>
<!-- bottom right view toggle -->
<svg class="a" style="left:0;top:835px" width="836" height="30" viewBox="1070 835 836 30">
 <rect x="1859.5" y="843.5" width="20" height="20" fill="#cce4f7" stroke="#3d96e6"/>
 <g fill="none" stroke="#9a7a8a"><rect x="1863.5" y="847.5" width="2" height="2"/><rect x="1863.5" y="851.5" width="2" height="2"/><rect x="1863.5" y="855.5" width="2" height="2"/></g>
 <g fill="#888"><rect x="1868" y="848" width="3" height="1"/><rect x="1872" y="848" width="3" height="1"/><rect x="1868" y="852" width="3" height="1"/><rect x="1872" y="852" width="3" height="1"/><rect x="1868" y="856" width="3" height="1"/><rect x="1872" y="856" width="3" height="1"/></g>
 <rect x="1884.5" y="847.5" width="14" height="11" fill="#fff" stroke="#9a7a8a"/><rect x="1886" y="850" width="11" height="6" fill="#2d5a8a"/>
</svg>
</div>
<!-- EX_END -->
<!-- NV_START --><div id="nv" class="a" style="left:674px;top:290px;width:961px;height:671px;background:#f0f0f0;border:1px solid #9a9a9a;color:#000;overflow:hidden;box-shadow:0 0 6px rgba(0,0,0,0.25)">
<div class="a" style="left:0px;top:0px;width:961px;height:31px;background:#fff"></div>
<div class="t" style="left:29px;top:8px;font-size:13px;color:#777">mbti_test @school-miao (myComputer) - 表 - Navicat Premium</div>
<div class="t" style="left:5px;top:38px;font-size:12.5px;color:#111">文件</div>
<div class="t" style="left:54px;top:38px;font-size:12.5px;color:#111">编辑</div>
<div class="t" style="left:104px;top:38px;font-size:12.5px;color:#111">查看</div>
<div class="t" style="left:154px;top:38px;font-size:12.5px;color:#111">表</div>
<div class="t" style="left:178px;top:38px;font-size:12.5px;color:#111">收藏夹</div>
<div class="t" style="left:242px;top:38px;font-size:12.5px;color:#111">工具</div>
<div class="t" style="left:291px;top:38px;font-size:12.5px;color:#111">窗口</div>
<div class="t" style="left:345px;top:38px;font-size:12.5px;color:#111">帮助</div>
<div class="t" style="left:902px;top:38px;font-size:12.5px;color:#111">登录</div>
<div class="a" style="left:935px;top:31px;width:25px;height:25px;background:#a79aa8"></div>
<div class="a" style="left:186px;top:59px;width:70px;height:60px;background:#c5ddf2;border-bottom:2px solid #a9cbea"></div>
<div class="a" style="left:169px;top:60px;width:1px;height:58px;background:#d8d8d8"></div>
<div class="t" style="left:28px;top:101px;font-size:12.5px;color:#111">连接</div>
<div class="t" style="left:91px;top:101px;font-size:12.5px;color:#111">新建查询</div>
<div class="t" style="left:214px;top:101px;font-size:12.5px;color:#111">表</div>
<div class="t" style="left:278px;top:101px;font-size:12.5px;color:#111">视图</div>
<div class="t" style="left:348px;top:101px;font-size:12.5px;color:#111">函数</div>
<div class="t" style="left:417px;top:101px;font-size:12.5px;color:#111">事件</div>
<div class="t" style="left:488px;top:101px;font-size:12.5px;color:#111">用户</div>
<div class="t" style="left:557px;top:101px;font-size:12.5px;color:#111">查询</div>
<div class="t" style="left:628px;top:101px;font-size:12.5px;color:#111">报表</div>
<div class="t" style="left:697px;top:101px;font-size:12.5px;color:#111">备份</div>
<div class="t" style="left:755px;top:101px;font-size:12.5px;color:#111">自动运行</div>
<div class="t" style="left:837px;top:101px;font-size:12.5px;color:#111">模型</div>
<div class="a" style="left:0px;top:121px;width:960px;height:1px;background:#d0d0d0"></div>
<div class="a" style="left:0px;top:122px;width:284px;height:527px;background:#fff"></div>
<div class="a" style="left:287px;top:122px;width:520px;height:527px;background:#f0f0f0"></div>
<div class="a" style="left:810px;top:122px;width:150px;height:527px;background:#fff"></div>
<div class="a" style="left:287px;top:122px;width:70px;height:26px;background:#f7f7f7;border-right:1px solid #d5d5d5;border-bottom:1px solid #cfcfcf"></div>
<div class="t" style="left:310px;top:128px;font-size:12.5px;color:#8a8a8a">对象</div>
<div class="a" style="left:357px;top:122px;width:18px;height:26px;background:#fff;border-right:1px solid #d5d5d5;border-bottom:1px solid #cfcfcf"></div>
<div class="a" style="left:375px;top:122px;width:150px;height:27px;background:#fff"></div>
<div class="t" style="left:399px;top:127px;font-size:13.3px;color:#111">mbti_test @school-...</div>
<div class="a" style="left:525px;top:122px;width:266px;height:26px;background:#f7f7f7;border-left:1px solid #cfcfcf;border-bottom:1px solid #cfcfcf;border-top:1px solid #e0e0e0"></div>
<div class="a" style="left:675px;top:126px;width:1px;height:18px;background:#cfcfcf"></div>
<div class="a" style="left:550px;top:127px;width:120px;height:18px;overflow:hidden;font-size:13.3px;color:#7a7a7a;white-space:pre;line-height:1">pro_score @school...</div>
<div class="a" style="left:700px;top:127px;width:90px;height:18px;overflow:hidden;font-size:13.3px;color:#7a7a7a;white-space:pre;line-height:1">schools @school-miao</div>
<div class="a" style="left:790px;top:122px;width:17px;height:26px;background:#fff;border-left:1px solid #d5d5d5;border-bottom:1px solid #cfcfcf"></div>
<div class="t" style="left:311px;top:158.5px;font-size:12.5px;color:#111">开始事务</div>
<div class="t" style="left:404px;top:158.5px;font-size:12.5px;color:#111">文本</div>
<div class="t" style="left:468px;top:158.5px;font-size:12.5px;color:#111">筛选</div>
<div class="t" style="left:522px;top:158.5px;font-size:12.5px;color:#111">排序</div>
<div class="t" style="left:588px;top:158.5px;font-size:12.5px;color:#111">导入</div>
<div class="t" style="left:641px;top:158.5px;font-size:12.5px;color:#111">导出</div>
<div class="a" style="left:374px;top:154px;width:1px;height:22px;background:#d8d8d8"></div>
<div class="a" style="left:558px;top:154px;width:1px;height:22px;background:#d8d8d8"></div>
<div class="a" style="left:287px;top:179px;width:504px;height:432px;background:#fff"></div>
<div class="a" style="left:299px;top:179px;width:44px;height:21px;background:#d7e7f6"></div>
<div class="a" style="left:287px;top:200px;width:504px;height:1px;background:#e2e2e2"></div>
<div class="a" style="left:343px;top:179px;width:1px;height:21px;background:#e8e8e8"></div>
<div class="a" style="left:419px;top:179px;width:1px;height:21px;background:#e8e8e8"></div>
<div class="a" style="left:495px;top:179px;width:1px;height:21px;background:#e8e8e8"></div>
<div class="a" style="left:646px;top:179px;width:1px;height:21px;background:#e8e8e8"></div>
<div class="a" style="left:791px;top:179px;width:1px;height:21px;background:#e8e8e8"></div>
<div class="t" style="left:301px;top:184px;font-size:12.5px;color:#111">id</div>
<div class="t" style="left:346px;top:184px;font-size:12.5px;color:#111">number</div>
<div class="t" style="left:421px;top:184px;font-size:12.5px;color:#111">type</div>
<div class="t" style="left:497px;top:184px;font-size:12.5px;color:#111">title</div>
<div class="t" style="left:649px;top:184px;font-size:12.5px;color:#111">a</div>
<div class="a" style="left:299px;top:200px;width:492px;height:22px;background:#fff"></div>
<div class="a" style="left:287px;top:221px;width:504px;height:1px;background:#ececec"></div>
<div class="a" style="left:287px;top:200px;width:12px;height:22px;background:#fff"></div>
<div class="a" style="left:299px;top:200px;width:1px;height:22px;background:#ececec"></div>
<div class="a" style="left:343px;top:200px;width:1px;height:22px;background:#ececec"></div>
<div class="a" style="left:419px;top:200px;width:1px;height:22px;background:#ececec"></div>
<div class="a" style="left:495px;top:200px;width:1px;height:22px;background:#ececec"></div>
<div class="a" style="left:646px;top:200px;width:1px;height:22px;background:#ececec"></div>
<div class="a" style="left:791px;top:200px;width:1px;height:22px;background:#ececec"></div>
<div class="a" style="left:287px;top:200px;width:12px;height:22px;background:#dde9f5"></div>
<div class="t" style="left:299px;width:41px;text-align:right;top:205px;font-size:12.5px;color:#111">1</div>
<div class="t" style="left:343px;width:73px;text-align:right;top:205px;font-size:12.5px;color:#111">1</div>
<div class="t" style="left:422px;top:205px;font-size:12.5px;color:#111">MBTI48</div>
<div class="a" style="left:498px;top:204px;width:148px;height:16px;overflow:hidden;white-space:pre;font-size:12.5px;line-height:14px;color:#111">1<span class="c12">．当你遇到新朋友时，你?</span></div>
<div class="a" style="left:649px;top:204px;width:142px;height:16px;overflow:hidden;white-space:pre;font-size:12.5px;line-height:14px;color:#111">A<span class="c12">．说话的时间与聆听的时间</span></div>
<div class="a" style="left:299px;top:222px;width:492px;height:22px;background:#fff"></div>
<div class="a" style="left:287px;top:243px;width:504px;height:1px;background:#ececec"></div>
<div class="a" style="left:287px;top:222px;width:12px;height:22px;background:#fff"></div>
<div class="a" style="left:299px;top:222px;width:1px;height:22px;background:#ececec"></div>
<div class="a" style="left:343px;top:222px;width:1px;height:22px;background:#ececec"></div>
<div class="a" style="left:419px;top:222px;width:1px;height:22px;background:#ececec"></div>
<div class="a" style="left:495px;top:222px;width:1px;height:22px;background:#ececec"></div>
<div class="a" style="left:646px;top:222px;width:1px;height:22px;background:#ececec"></div>
<div class="a" style="left:791px;top:222px;width:1px;height:22px;background:#ececec"></div>
<div class="t" style="left:299px;width:41px;text-align:right;top:227px;font-size:12.5px;color:#111">2</div>
<div class="t" style="left:343px;width:73px;text-align:right;top:227px;font-size:12.5px;color:#111">2</div>
<div class="t" style="left:422px;top:227px;font-size:12.5px;color:#111">MBTI48</div>
<div class="a" style="left:498px;top:226px;width:148px;height:16px;overflow:hidden;white-space:pre;font-size:12.5px;line-height:14px;color:#111">2<span class="c12">．下列哪一种是你的一般生活取向?</span></div>
<div class="a" style="left:649px;top:226px;width:142px;height:16px;overflow:hidden;white-space:pre;font-size:12.5px;line-height:14px;color:#111">A<span class="c12">．只管做吧</span></div>
<div class="a" style="left:299px;top:244px;width:492px;height:22px;background:#f5f7f8"></div>
<div class="a" style="left:287px;top:265px;width:504px;height:1px;background:#ececec"></div>
<div class="a" style="left:287px;top:244px;width:12px;height:22px;background:#fff"></div>
<div class="a" style="left:299px;top:244px;width:1px;height:22px;background:#ececec"></div>
<div class="a" style="left:343px;top:244px;width:1px;height:22px;background:#ececec"></div>
<div class="a" style="left:419px;top:244px;width:1px;height:22px;background:#ececec"></div>
<div class="a" style="left:495px;top:244px;width:1px;height:22px;background:#ececec"></div>
<div class="a" style="left:646px;top:244px;width:1px;height:22px;background:#ececec"></div>
<div class="a" style="left:791px;top:244px;width:1px;height:22px;background:#ececec"></div>
<div class="t" style="left:299px;width:41px;text-align:right;top:249px;font-size:12.5px;color:#111">3</div>
<div class="t" style="left:343px;width:73px;text-align:right;top:249px;font-size:12.5px;color:#111">3</div>
<div class="t" style="left:422px;top:249px;font-size:12.5px;color:#111">MBTI48</div>
<div class="a" style="left:498px;top:248px;width:148px;height:16px;overflow:hidden;white-space:pre;font-size:12.5px;line-height:14px;color:#111">3<span class="c12">．你喜欢自己的哪种性格?</span></div>
<div class="a" style="left:649px;top:248px;width:142px;height:16px;overflow:hidden;white-space:pre;font-size:12.5px;line-height:14px;color:#111">A<span class="c12">．冷静而理性</span></div>
<div class="a" style="left:299px;top:266px;width:492px;height:22px;background:#fff"></div>
<div class="a" style="left:287px;top:287px;width:504px;height:1px;background:#ececec"></div>
<div class="a" style="left:287px;top:266px;width:12px;height:22px;background:#fff"></div>
<div class="a" style="left:299px;top:266px;width:1px;height:22px;background:#ececec"></div>
<div class="a" style="left:343px;top:266px;width:1px;height:22px;background:#ececec"></div>
<div class="a" style="left:419px;top:266px;width:1px;height:22px;background:#ececec"></div>
<div class="a" style="left:495px;top:266px;width:1px;height:22px;background:#ececec"></div>
<div class="a" style="left:646px;top:266px;width:1px;height:22px;background:#ececec"></div>
<div class="a" style="left:791px;top:266px;width:1px;height:22px;background:#ececec"></div>
<div class="t" style="left:299px;width:41px;text-align:right;top:271px;font-size:12.5px;color:#111">4</div>
<div class="t" style="left:343px;width:73px;text-align:right;top:271px;font-size:12.5px;color:#111">4</div>
<div class="t" style="left:422px;top:271px;font-size:12.5px;color:#111">MBTI48</div>
<div class="a" style="left:498px;top:270px;width:148px;height:16px;overflow:hidden;white-space:pre;font-size:12.5px;line-height:14px;color:#111">4<span class="c12">．你擅长</span></div>
<div class="a" style="left:649px;top:270px;width:142px;height:16px;overflow:hidden;white-space:pre;font-size:12.5px;line-height:14px;color:#111">A<span class="c12">．在有需要时间时同时协调</span></div>
<div class="a" style="left:299px;top:288px;width:492px;height:22px;background:#fff"></div>
<div class="a" style="left:287px;top:309px;width:504px;height:1px;background:#ececec"></div>
<div class="a" style="left:287px;top:288px;width:12px;height:22px;background:#fff"></div>
<div class="a" style="left:299px;top:288px;width:1px;height:22px;background:#ececec"></div>
<div class="a" style="left:343px;top:288px;width:1px;height:22px;background:#ececec"></div>
<div class="a" style="left:419px;top:288px;width:1px;height:22px;background:#ececec"></div>
<div class="a" style="left:495px;top:288px;width:1px;height:22px;background:#ececec"></div>
<div class="a" style="left:646px;top:288px;width:1px;height:22px;background:#ececec"></div>
<div class="a" style="left:791px;top:288px;width:1px;height:22px;background:#ececec"></div>
<div class="t" style="left:299px;width:41px;text-align:right;top:293px;font-size:12.5px;color:#111">5</div>
<div class="t" style="left:343px;width:73px;text-align:right;top:293px;font-size:12.5px;color:#111">5</div>
<div class="t" style="left:422px;top:293px;font-size:12.5px;color:#111">MBTI48</div>
<div class="a" style="left:498px;top:292px;width:148px;height:16px;overflow:hidden;white-space:pre;font-size:12.5px;line-height:14px;color:#111">5<span class="c12">．你参与社交聚会时</span></div>
<div class="a" style="left:649px;top:292px;width:142px;height:16px;overflow:hidden;white-space:pre;font-size:12.5px;line-height:14px;color:#111">A<span class="c12">．总是能认识新朋友</span></div>
<div class="a" style="left:299px;top:310px;width:492px;height:22px;background:#f1f7fd"></div>
<div class="a" style="left:287px;top:331px;width:504px;height:1px;background:#ececec"></div>
<div class="a" style="left:287px;top:310px;width:12px;height:22px;background:#fff"></div>
<div class="a" style="left:299px;top:310px;width:1px;height:22px;background:#ececec"></div>
<div class="a" style="left:343px;top:310px;width:1px;height:22px;background:#ececec"></div>
<div class="a" style="left:419px;top:310px;width:1px;height:22px;background:#ececec"></div>
<div class="a" style="left:495px;top:310px;width:1px;height:22px;background:#ececec"></div>
<div class="a" style="left:646px;top:310px;width:1px;height:22px;background:#ececec"></div>
<div class="a" style="left:791px;top:310px;width:1px;height:22px;background:#ececec"></div>
<div class="t" style="left:299px;width:41px;text-align:right;top:315px;font-size:12.5px;color:#111">6</div>
<div class="t" style="left:343px;width:73px;text-align:right;top:315px;font-size:12.5px;color:#111">6</div>
<div class="t" style="left:422px;top:315px;font-size:12.5px;color:#111">MBTI48</div>
<div class="a" style="left:498px;top:314px;width:148px;height:16px;overflow:hidden;white-space:pre;font-size:12.5px;line-height:14px;color:#111">6<span class="c12">．当你尝试了解某些事情时</span></div>
<div class="a" style="left:649px;top:314px;width:142px;height:16px;overflow:hidden;white-space:pre;font-size:12.5px;line-height:14px;color:#111">A<span class="c12">．先要了解细节</span></div>
<div class="a" style="left:299px;top:332px;width:492px;height:22px;background:#fff"></div>
<div class="a" style="left:287px;top:353px;width:504px;height:1px;background:#ececec"></div>
<div class="a" style="left:287px;top:332px;width:12px;height:22px;background:#fff"></div>
<div class="a" style="left:299px;top:332px;width:1px;height:22px;background:#ececec"></div>
<div class="a" style="left:343px;top:332px;width:1px;height:22px;background:#ececec"></div>
<div class="a" style="left:419px;top:332px;width:1px;height:22px;background:#ececec"></div>
<div class="a" style="left:495px;top:332px;width:1px;height:22px;background:#ececec"></div>
<div class="a" style="left:646px;top:332px;width:1px;height:22px;background:#ececec"></div>
<div class="a" style="left:791px;top:332px;width:1px;height:22px;background:#ececec"></div>
<div class="t" style="left:299px;width:41px;text-align:right;top:337px;font-size:12.5px;color:#111">7</div>
<div class="t" style="left:343px;width:73px;text-align:right;top:337px;font-size:12.5px;color:#111">7</div>
<div class="t" style="left:422px;top:337px;font-size:12.5px;color:#111">MBTI48</div>
<div class="a" style="left:498px;top:336px;width:148px;height:16px;overflow:hidden;white-space:pre;font-size:12.5px;line-height:14px;color:#111">7<span class="c12">．你对下列哪方面较感兴趣</span></div>
<div class="a" style="left:649px;top:336px;width:142px;height:16px;overflow:hidden;white-space:pre;font-size:12.5px;line-height:14px;color:#111">A<span class="c12">．知道别人的想法</span></div>
<div class="a" style="left:299px;top:354px;width:492px;height:22px;background:#fff"></div>
<div class="a" style="left:287px;top:375px;width:504px;height:1px;background:#ececec"></div>
<div class="a" style="left:287px;top:354px;width:12px;height:22px;background:#fff"></div>
<div class="a" style="left:299px;top:354px;width:1px;height:22px;background:#ececec"></div>
<div class="a" style="left:343px;top:354px;width:1px;height:22px;background:#ececec"></div>
<div class="a" style="left:419px;top:354px;width:1px;height:22px;background:#ececec"></div>
<div class="a" style="left:495px;top:354px;width:1px;height:22px;background:#ececec"></div>
<div class="a" style="left:646px;top:354px;width:1px;height:22px;background:#ececec"></div>
<div class="a" style="left:791px;top:354px;width:1px;height:22px;background:#ececec"></div>
<div class="t" style="left:299px;width:41px;text-align:right;top:359px;font-size:12.5px;color:#111">8</div>
<div class="t" style="left:343px;width:73px;text-align:right;top:359px;font-size:12.5px;color:#111">8</div>
<div class="t" style="left:422px;top:359px;font-size:12.5px;color:#111">MBTI48</div>
<div class="a" style="left:498px;top:358px;width:148px;height:16px;overflow:hidden;white-space:pre;font-size:12.5px;line-height:14px;color:#111">8<span class="c12">．你较喜欢下列哪个工作?</span></div>
<div class="a" style="left:649px;top:358px;width:142px;height:16px;overflow:hidden;white-space:pre;font-size:12.5px;line-height:14px;color:#111">A<span class="c12">．能让你迅速和即时做出反应</span></div>
<div class="a" style="left:299px;top:376px;width:492px;height:22px;background:#f5f7f8"></div>
<div class="a" style="left:287px;top:397px;width:504px;height:1px;background:#ececec"></div>
<div class="a" style="left:287px;top:376px;width:12px;height:22px;background:#fff"></div>
<div class="a" style="left:299px;top:376px;width:1px;height:22px;background:#ececec"></div>
<div class="a" style="left:343px;top:376px;width:1px;height:22px;background:#ececec"></div>
<div class="a" style="left:419px;top:376px;width:1px;height:22px;background:#ececec"></div>
<div class="a" style="left:495px;top:376px;width:1px;height:22px;background:#ececec"></div>
<div class="a" style="left:646px;top:376px;width:1px;height:22px;background:#ececec"></div>
<div class="a" style="left:791px;top:376px;width:1px;height:22px;background:#ececec"></div>
<div class="t" style="left:299px;width:41px;text-align:right;top:381px;font-size:12.5px;color:#111">9</div>
<div class="t" style="left:343px;width:73px;text-align:right;top:381px;font-size:12.5px;color:#111">9</div>
<div class="t" style="left:422px;top:381px;font-size:12.5px;color:#111">MBTI48</div>
<div class="a" style="left:498px;top:380px;width:148px;height:16px;overflow:hidden;white-space:pre;font-size:12.5px;line-height:14px;color:#111">9<span class="c12">．下列哪一种说法较适合你</span></div>
<div class="a" style="left:649px;top:380px;width:142px;height:16px;overflow:hidden;white-space:pre;font-size:12.5px;line-height:14px;color:#111">A<span class="c12">．当我与友人尽兴后，我</span></div>
<div class="a" style="left:299px;top:398px;width:492px;height:22px;background:#fff"></div>
<div class="a" style="left:287px;top:419px;width:504px;height:1px;background:#ececec"></div>
<div class="a" style="left:287px;top:398px;width:12px;height:22px;background:#fff"></div>
<div class="a" style="left:299px;top:398px;width:1px;height:22px;background:#ececec"></div>
<div class="a" style="left:343px;top:398px;width:1px;height:22px;background:#ececec"></div>
<div class="a" style="left:419px;top:398px;width:1px;height:22px;background:#ececec"></div>
<div class="a" style="left:495px;top:398px;width:1px;height:22px;background:#ececec"></div>
<div class="a" style="left:646px;top:398px;width:1px;height:22px;background:#ececec"></div>
<div class="a" style="left:791px;top:398px;width:1px;height:22px;background:#ececec"></div>
<div class="t" style="left:299px;width:41px;text-align:right;top:403px;font-size:12.5px;color:#111">10</div>
<div class="t" style="left:343px;width:73px;text-align:right;top:403px;font-size:12.5px;color:#111">10</div>
<div class="t" style="left:422px;top:403px;font-size:12.5px;color:#111">MBTI48</div>
<div class="a" style="left:498px;top:402px;width:148px;height:16px;overflow:hidden;white-space:pre;font-size:12.5px;line-height:14px;color:#111">10<span class="c12">．下列哪一种说法较适合你</span></div>
<div class="a" style="left:649px;top:402px;width:142px;height:16px;overflow:hidden;white-space:pre;font-size:12.5px;line-height:14px;color:#111">A<span class="c12">．我较有兴趣知道别人的经</span></div>
<div class="a" style="left:299px;top:420px;width:492px;height:22px;background:#fff"></div>
<div class="a" style="left:287px;top:441px;width:504px;height:1px;background:#ececec"></div>
<div class="a" style="left:287px;top:420px;width:12px;height:22px;background:#fff"></div>
<div class="a" style="left:299px;top:420px;width:1px;height:22px;background:#ececec"></div>
<div class="a" style="left:343px;top:420px;width:1px;height:22px;background:#ececec"></div>
<div class="a" style="left:419px;top:420px;width:1px;height:22px;background:#ececec"></div>
<div class="a" style="left:495px;top:420px;width:1px;height:22px;background:#ececec"></div>
<div class="a" style="left:646px;top:420px;width:1px;height:22px;background:#ececec"></div>
<div class="a" style="left:791px;top:420px;width:1px;height:22px;background:#ececec"></div>
<div class="t" style="left:299px;width:41px;text-align:right;top:425px;font-size:12.5px;color:#111">11</div>
<div class="t" style="left:343px;width:73px;text-align:right;top:425px;font-size:12.5px;color:#111">11</div>
<div class="t" style="left:422px;top:425px;font-size:12.5px;color:#111">MBTI48</div>
<div class="a" style="left:498px;top:424px;width:148px;height:16px;overflow:hidden;white-space:pre;font-size:12.5px;line-height:14px;color:#111">11<span class="c12">．下列哪一种说法较适合你</span></div>
<div class="a" style="left:649px;top:424px;width:142px;height:16px;overflow:hidden;white-space:pre;font-size:12.5px;line-height:14px;color:#111">A<span class="c12">．我擅长订出一些可行的计</span></div>
<div class="a" style="left:299px;top:442px;width:492px;height:22px;background:#f1f7fd"></div>
<div class="a" style="left:287px;top:463px;width:504px;height:1px;background:#ececec"></div>
<div class="a" style="left:287px;top:442px;width:12px;height:22px;background:#fff"></div>
<div class="a" style="left:299px;top:442px;width:1px;height:22px;background:#ececec"></div>
<div class="a" style="left:343px;top:442px;width:1px;height:22px;background:#ececec"></div>
<div class="a" style="left:419px;top:442px;width:1px;height:22px;background:#ececec"></div>
<div class="a" style="left:495px;top:442px;width:1px;height:22px;background:#ececec"></div>
<div class="a" style="left:646px;top:442px;width:1px;height:22px;background:#ececec"></div>
<div class="a" style="left:791px;top:442px;width:1px;height:22px;background:#ececec"></div>
<div class="t" style="left:299px;width:41px;text-align:right;top:447px;font-size:12.5px;color:#111">12</div>
<div class="t" style="left:343px;width:73px;text-align:right;top:447px;font-size:12.5px;color:#111">12</div>
<div class="t" style="left:422px;top:447px;font-size:12.5px;color:#111">MBTI48</div>
<div class="a" style="left:498px;top:446px;width:148px;height:16px;overflow:hidden;white-space:pre;font-size:12.5px;line-height:14px;color:#111">12<span class="c12">．下列哪一种说法较适合你</span></div>
<div class="a" style="left:649px;top:446px;width:142px;height:16px;overflow:hidden;white-space:pre;font-size:12.5px;line-height:14px;color:#111">A<span class="c12">．我会突然尝试做某些事</span></div>
<div class="a" style="left:299px;top:464px;width:492px;height:22px;background:#fff"></div>
<div class="a" style="left:287px;top:485px;width:504px;height:1px;background:#ececec"></div>
<div class="a" style="left:287px;top:464px;width:12px;height:22px;background:#fff"></div>
<div class="a" style="left:299px;top:464px;width:1px;height:22px;background:#ececec"></div>
<div class="a" style="left:343px;top:464px;width:1px;height:22px;background:#ececec"></div>
<div class="a" style="left:419px;top:464px;width:1px;height:22px;background:#ececec"></div>
<div class="a" style="left:495px;top:464px;width:1px;height:22px;background:#ececec"></div>
<div class="a" style="left:646px;top:464px;width:1px;height:22px;background:#ececec"></div>
<div class="a" style="left:791px;top:464px;width:1px;height:22px;background:#ececec"></div>
<div class="t" style="left:299px;width:41px;text-align:right;top:469px;font-size:12.5px;color:#111">13</div>
<div class="t" style="left:343px;width:73px;text-align:right;top:469px;font-size:12.5px;color:#111">13</div>
<div class="t" style="left:422px;top:469px;font-size:12.5px;color:#111">MBTI48</div>
<div class="a" style="left:498px;top:468px;width:148px;height:16px;overflow:hidden;white-space:pre;font-size:12.5px;line-height:14px;color:#111">13<span class="c12">．下列哪一种说法较适合你</span></div>
<div class="a" style="left:649px;top:468px;width:142px;height:16px;overflow:hidden;white-space:pre;font-size:12.5px;line-height:14px;color:#111">A<span class="c12">．我经常边说话，边思考</span></div>
<div class="a" style="left:299px;top:486px;width:492px;height:22px;background:#fff"></div>
<div class="a" style="left:287px;top:507px;width:504px;height:1px;background:#ececec"></div>
<div class="a" style="left:287px;top:486px;width:12px;height:22px;background:#fff"></div>
<div class="a" style="left:299px;top:486px;width:1px;height:22px;background:#ececec"></div>
<div class="a" style="left:343px;top:486px;width:1px;height:22px;background:#ececec"></div>
<div class="a" style="left:419px;top:486px;width:1px;height:22px;background:#ececec"></div>
<div class="a" style="left:495px;top:486px;width:1px;height:22px;background:#ececec"></div>
<div class="a" style="left:646px;top:486px;width:1px;height:22px;background:#ececec"></div>
<div class="a" style="left:791px;top:486px;width:1px;height:22px;background:#ececec"></div>
<div class="t" style="left:299px;width:41px;text-align:right;top:491px;font-size:12.5px;color:#111">14</div>
<div class="t" style="left:343px;width:73px;text-align:right;top:491px;font-size:12.5px;color:#111">14</div>
<div class="t" style="left:422px;top:491px;font-size:12.5px;color:#111">MBTI48</div>
<div class="a" style="left:498px;top:490px;width:148px;height:16px;overflow:hidden;white-space:pre;font-size:12.5px;line-height:14px;color:#111">14<span class="c12">．下列哪一种说法较适合你</span></div>
<div class="a" style="left:649px;top:490px;width:142px;height:16px;overflow:hidden;white-space:pre;font-size:12.5px;line-height:14px;color:#111">A<span class="c12">．四周的实际环境对我很</span></div>
<div class="a" style="left:299px;top:508px;width:492px;height:22px;background:#f5f7f8"></div>
<div class="a" style="left:287px;top:529px;width:504px;height:1px;background:#ececec"></div>
<div class="a" style="left:287px;top:508px;width:12px;height:22px;background:#fff"></div>
<div class="a" style="left:299px;top:508px;width:1px;height:22px;background:#ececec"></div>
<div class="a" style="left:343px;top:508px;width:1px;height:22px;background:#ececec"></div>
<div class="a" style="left:419px;top:508px;width:1px;height:22px;background:#ececec"></div>
<div class="a" style="left:495px;top:508px;width:1px;height:22px;background:#ececec"></div>
<div class="a" style="left:646px;top:508px;width:1px;height:22px;background:#ececec"></div>
<div class="a" style="left:791px;top:508px;width:1px;height:22px;background:#ececec"></div>
<div class="t" style="left:299px;width:41px;text-align:right;top:513px;font-size:12.5px;color:#111">15</div>
<div class="t" style="left:343px;width:73px;text-align:right;top:513px;font-size:12.5px;color:#111">15</div>
<div class="t" style="left:422px;top:513px;font-size:12.5px;color:#111">MBTI48</div>
<div class="a" style="left:498px;top:512px;width:148px;height:16px;overflow:hidden;white-space:pre;font-size:12.5px;line-height:14px;color:#111">15<span class="c12">．下列哪一种说法较适合你</span></div>
<div class="a" style="left:649px;top:512px;width:142px;height:16px;overflow:hidden;white-space:pre;font-size:12.5px;line-height:14px;color:#111">A<span class="c12">．我喜欢分析，心思缜密</span></div>
<div class="a" style="left:299px;top:530px;width:492px;height:22px;background:#fff"></div>
<div class="a" style="left:287px;top:551px;width:504px;height:1px;background:#ececec"></div>
<div class="a" style="left:287px;top:530px;width:12px;height:22px;background:#fff"></div>
<div class="a" style="left:299px;top:530px;width:1px;height:22px;background:#ececec"></div>
<div class="a" style="left:343px;top:530px;width:1px;height:22px;background:#ececec"></div>
<div class="a" style="left:419px;top:530px;width:1px;height:22px;background:#ececec"></div>
<div class="a" style="left:495px;top:530px;width:1px;height:22px;background:#ececec"></div>
<div class="a" style="left:646px;top:530px;width:1px;height:22px;background:#ececec"></div>
<div class="a" style="left:791px;top:530px;width:1px;height:22px;background:#ececec"></div>
<div class="t" style="left:299px;width:41px;text-align:right;top:535px;font-size:12.5px;color:#111">16</div>
<div class="t" style="left:343px;width:73px;text-align:right;top:535px;font-size:12.5px;color:#111">16</div>
<div class="t" style="left:422px;top:535px;font-size:12.5px;color:#111">MBTI48</div>
<div class="a" style="left:498px;top:534px;width:148px;height:16px;overflow:hidden;white-space:pre;font-size:12.5px;line-height:14px;color:#111">16<span class="c12">．下列哪一种说法较适合你</span></div>
<div class="a" style="left:649px;top:534px;width:142px;height:16px;overflow:hidden;white-space:pre;font-size:12.5px;line-height:14px;color:#111">A<span class="c12">．即使已出计划，我也喜</span></div>
<div class="a" style="left:299px;top:552px;width:492px;height:22px;background:#fff"></div>
<div class="a" style="left:287px;top:573px;width:504px;height:1px;background:#ececec"></div>
<div class="a" style="left:287px;top:552px;width:12px;height:22px;background:#fff"></div>
<div class="a" style="left:299px;top:552px;width:1px;height:22px;background:#ececec"></div>
<div class="a" style="left:343px;top:552px;width:1px;height:22px;background:#ececec"></div>
<div class="a" style="left:419px;top:552px;width:1px;height:22px;background:#ececec"></div>
<div class="a" style="left:495px;top:552px;width:1px;height:22px;background:#ececec"></div>
<div class="a" style="left:646px;top:552px;width:1px;height:22px;background:#ececec"></div>
<div class="a" style="left:791px;top:552px;width:1px;height:22px;background:#ececec"></div>
<div class="t" style="left:299px;width:41px;text-align:right;top:557px;font-size:12.5px;color:#111">17</div>
<div class="t" style="left:343px;width:73px;text-align:right;top:557px;font-size:12.5px;color:#111">17</div>
<div class="t" style="left:422px;top:557px;font-size:12.5px;color:#111">MBTI48</div>
<div class="a" style="left:498px;top:556px;width:148px;height:16px;overflow:hidden;white-space:pre;font-size:12.5px;line-height:14px;color:#111">17<span class="c12">．下列哪一种说法较适合你</span></div>
<div class="a" style="left:649px;top:556px;width:142px;height:16px;overflow:hidden;white-space:pre;font-size:12.5px;line-height:14px;color:#111">A<span class="c12">．认识我的人，一般都知</span></div>
<div class="a" style="left:299px;top:574px;width:492px;height:22px;background:#f1f7fd"></div>
<div class="a" style="left:287px;top:595px;width:504px;height:1px;background:#ececec"></div>
<div class="a" style="left:287px;top:574px;width:12px;height:22px;background:#fff"></div>
<div class="a" style="left:299px;top:574px;width:1px;height:22px;background:#ececec"></div>
<div class="a" style="left:343px;top:574px;width:1px;height:22px;background:#ececec"></div>
<div class="a" style="left:419px;top:574px;width:1px;height:22px;background:#ececec"></div>
<div class="a" style="left:495px;top:574px;width:1px;height:22px;background:#ececec"></div>
<div class="a" style="left:646px;top:574px;width:1px;height:22px;background:#ececec"></div>
<div class="a" style="left:791px;top:574px;width:1px;height:22px;background:#ececec"></div>
<div class="t" style="left:299px;width:41px;text-align:right;top:579px;font-size:12.5px;color:#111">18</div>
<div class="t" style="left:343px;width:73px;text-align:right;top:579px;font-size:12.5px;color:#111">18</div>
<div class="t" style="left:422px;top:579px;font-size:12.5px;color:#111">MBTI48</div>
<div class="a" style="left:498px;top:578px;width:148px;height:16px;overflow:hidden;white-space:pre;font-size:12.5px;line-height:14px;color:#111">18<span class="c12">．下列哪一种说法较适合你</span></div>
<div class="a" style="left:649px;top:578px;width:142px;height:16px;overflow:hidden;white-space:pre;font-size:12.5px;line-height:14px;color:#111">A<span class="c12">．如果我喜欢某种活动，我</span></div>
<div class="a" style="left:791px;top:179px;width:16px;height:432px;background:#f0f0f0"></div>
<div class="a" style="left:793px;top:196px;width:12px;height:203px;background:#cdcdcd"></div>
<div class="a" style="left:287px;top:611px;width:504px;height:15px;background:#f0f0f0"></div>
<div class="a" style="left:304px;top:612px;width:17px;height:13px;background:#cdcdcd"></div>
<div class="a" style="left:791px;top:611px;width:16px;height:15px;background:#f0f0f0"></div>
<div class="a" style="left:651px;top:628px;width:22px;height:20px;background:#fff"></div>
<div class="t" style="left:658px;top:632px;font-size:12.5px;color:#111">1</div>
<div class="a" style="left:759px;top:627px;width:24px;height:22px;background:#c9e0f7;border:1px solid #90c0ea"></div>
<div class="a" style="left:944px;top:147px;width:15px;height:502px;background:#f0f0f0"></div>
<div class="a" style="left:946px;top:164px;width:11px;height:291px;background:#cdcdcd"></div>
<div class="a" style="left:890px;top:169px;width:46px;height:18px;overflow:hidden;white-space:pre;font-size:13px;line-height:15px;color:#333;font-weight:bold">mbti_test</div>
<div class="t" style="left:890px;top:193px;font-size:12.5px;color:#999">表</div>
<div class="a" style="left:826px;top:239.0px;width:117px;height:18.0px;overflow:hidden;white-space:pre;font-size:12.5px;line-height:15px;color:#8a8a8a">行</div>
<div class="a" style="left:826px;top:258.0px;width:117px;height:18px;overflow:hidden;white-space:pre;font-size:12.5px;line-height:15px;color:#333">48</div>
<div class="a" style="left:826px;top:289.9px;width:117px;height:18.0px;overflow:hidden;white-space:pre;font-size:12.5px;line-height:15px;color:#8a8a8a">引擎</div>
<div class="a" style="left:826px;top:308.9px;width:117px;height:18px;overflow:hidden;white-space:pre;font-size:12.5px;line-height:15px;color:#333">InnoDB</div>
<div class="a" style="left:826px;top:340.8px;width:117px;height:18.0px;overflow:hidden;white-space:pre;font-size:12.5px;line-height:15px;color:#8a8a8a">自动递增</div>
<div class="a" style="left:826px;top:359.8px;width:117px;height:18px;overflow:hidden;white-space:pre;font-size:12.5px;line-height:15px;color:#333">49</div>
<div class="a" style="left:826px;top:391.7px;width:117px;height:18.0px;overflow:hidden;white-space:pre;font-size:12.5px;line-height:15px;color:#8a8a8a">行格式</div>
<div class="a" style="left:826px;top:410.7px;width:117px;height:18px;overflow:hidden;white-space:pre;font-size:12.5px;line-height:15px;color:#333">Compact</div>
<div class="a" style="left:826px;top:442.6px;width:117px;height:18.0px;overflow:hidden;white-space:pre;font-size:12.5px;line-height:15px;color:#8a8a8a">修改日期</div>
<div class="a" style="left:826px;top:461.6px;width:117px;height:18px;overflow:hidden;white-space:pre;font-size:12.5px;line-height:15px;color:#333">--</div>
<div class="a" style="left:826px;top:493.5px;width:117px;height:18.0px;overflow:hidden;white-space:pre;font-size:12.5px;line-height:15px;color:#8a8a8a">创建日期</div>
<div class="a" style="left:826px;top:512.5px;width:117px;height:18px;overflow:hidden;white-space:pre;font-size:12.5px;line-height:15px;color:#333">2019-08-12 22:53:4</div>
<div class="a" style="left:826px;top:544.4px;width:117px;height:18.0px;overflow:hidden;white-space:pre;font-size:12.5px;line-height:15px;color:#8a8a8a">检查时间</div>
<div class="a" style="left:826px;top:563.4px;width:117px;height:18px;overflow:hidden;white-space:pre;font-size:12.5px;line-height:15px;color:#333">--</div>
<div class="a" style="left:826px;top:595.3px;width:117px;height:18.0px;overflow:hidden;white-space:pre;font-size:12.5px;line-height:15px;color:#8a8a8a">索引长度</div>
<div class="a" style="left:826px;top:614.3px;width:117px;height:18px;overflow:hidden;white-space:pre;font-size:12.5px;line-height:15px;color:#333">0 bytes (0)</div>
<div class="a" style="left:826px;top:646.2px;width:117px;height:2.8px;overflow:hidden;white-space:pre;font-size:12.5px;line-height:15px;color:#8a8a8a">数据长度</div>
<div class="a" style="left:0px;top:649px;width:960px;height:22px;background:#f0f0f0;border-top:1px solid #d8d8d8"></div>
<div class="a" style="left:0px;top:649px;width:284px;height:1px;background:#d8d8d8"></div>
<div class="a" style="left:286px;top:651px;width:1px;height:19px;background:#d0d0d0"></div>
<div class="a" style="left:585px;top:651px;width:1px;height:19px;background:#d0d0d0"></div>
<div class="t" style="left:292px;top:654px;font-size:12.5px;color:#111">SELECT * FROM `school-miao`.`mbti_test` LIMIT 0,</div>
<div class="t" style="left:660px;top:654px;font-size:12.5px;color:#111">第 1 条记录 (共 48 条) 于第 1 页</div>
<div class="a" style="left:910px;top:650px;width:24px;height:21px;background:#c9e0f7;border:1px solid #90c0ea"></div>
<div class="a" style="left:934px;top:650px;width:24px;height:21px;background:#c9e0f7;border:1px solid #90c0ea"></div>
<div class="t" style="left:40px;top:124px;font-size:13px;color:#111">Mine-阿里云</div>
<div class="t" style="left:40px;top:144px;font-size:13px;color:#111">myComputer</div>
<div class="t" style="left:54px;top:164px;font-size:13px;color:#111">db_file</div>
<div class="t" style="left:54px;top:184px;font-size:13px;color:#111">demo_edu_v2_0</div>
<div class="t" style="left:54px;top:204px;font-size:13px;color:#111">forest_blog</div>
<div class="t" style="left:54px;top:224px;font-size:13px;color:#111">information_schema</div>
<div class="t" style="left:54px;top:244px;font-size:13px;color:#111">mysql</div>
<div class="t" style="left:54px;top:264px;font-size:13px;color:#111">mytest</div>
<div class="t" style="left:54px;top:284px;font-size:13px;color:#111">performance_schema</div>
<div class="t" style="left:54px;top:304px;font-size:13px;color:#111">school-miao</div>
<div class="t" style="left:68px;top:324px;font-size:13px;color:#111">表</div>
<div class="a" style="left:0px;top:342px;width:284px;height:20px;background:#d9d9d9"></div>
<div class="t" style="left:82px;top:344px;font-size:13px;color:#111">mbti_test</div>
<div class="t" style="left:82px;top:364px;font-size:13px;color:#111">pro_score</div>
<div class="t" style="left:82px;top:384px;font-size:13px;color:#111">schools</div>
<div class="t" style="left:82px;top:404px;font-size:13px;color:#111">user_code</div>
<div class="t" style="left:82px;top:424px;font-size:13px;color:#111">user_info</div>
<div class="t" style="left:82px;top:444px;font-size:13px;color:#111">user_online</div>
<div class="t" style="left:82px;top:464px;font-size:13px;color:#111">year_score</div>
<div class="t" style="left:68px;top:484px;font-size:13px;color:#111">视图</div>
<div class="t" style="left:68px;top:504px;font-size:13px;color:#111">函数</div>
<div class="t" style="left:68px;top:524px;font-size:13px;color:#111">事件</div>
<div class="t" style="left:68px;top:544px;font-size:13px;color:#111">查询</div>
<div class="t" style="left:68px;top:564px;font-size:13px;color:#111">报表</div>
<div class="t" style="left:68px;top:584px;font-size:13px;color:#111">备份</div>
<div class="t" style="left:54px;top:604px;font-size:13px;color:#111">traffic</div>
<div class="t" style="left:54px;top:624px;font-size:13px;color:#111">virus_system</div>
<svg class="a" style="left:0;top:0" width="961" height="671" viewBox="674 290 961 671"><rect x="693" y="413.5" width="15" height="15" rx="1.5" fill="#6e6e6e"/><path d="M695 416.5c4 0 8 2 9 6l2 3-4-1c-2 1-5 0-6-3z" fill="#fff"/><path d="M677 438.5l4 4 4-4" stroke="#555" stroke-width="1.2" fill="none"/><rect x="693" y="433.5" width="15" height="15" rx="1.5" fill="#5cb85c"/><path d="M695 436.5c4 0 8 2 9 6l2 3-4-1c-2 1-5 0-6-3z" fill="#fff"/><ellipse cx="714" cy="455.5" rx="7" ry="2.2" fill="#6a6a6a"/><ellipse cx="714" cy="459.1" rx="7" ry="2.2" fill="#6a6a6a"/><ellipse cx="714" cy="462.7" rx="7" ry="2.2" fill="#6a6a6a"/><ellipse cx="714" cy="466.3" rx="7" ry="2.2" fill="#6a6a6a"/><g fill="#fff" opacity="0.9"><rect x="708" y="456.9" width="12" height="0.9"/><rect x="708" y="460.5" width="12" height="0.9"/><rect x="708" y="464.1" width="12" height="0.9"/></g><ellipse cx="714" cy="475.5" rx="7" ry="2.2" fill="#6a6a6a"/><ellipse cx="714" cy="479.1" rx="7" ry="2.2" fill="#6a6a6a"/><ellipse cx="714" cy="482.7" rx="7" ry="2.2" fill="#6a6a6a"/><ellipse cx="714" cy="486.3" rx="7" ry="2.2" fill="#6a6a6a"/><g fill="#fff" opacity="0.9"><rect x="708" y="476.9" width="12" height="0.9"/><rect x="708" y="480.5" width="12" height="0.9"/><rect x="708" y="484.1" width="12" height="0.9"/></g><ellipse cx="714" cy="495.5" rx="7" ry="2.2" fill="#6a6a6a"/><ellipse cx="714" cy="499.1" rx="7" ry="2.2" fill="#6a6a6a"/><ellipse cx="714" cy="502.7" rx="7" ry="2.2" fill="#6a6a6a"/><ellipse cx="714" cy="506.3" rx="7" ry="2.2" fill="#6a6a6a"/><g fill="#fff" opacity="0.9"><rect x="708" y="496.9" width="12" height="0.9"/><rect x="708" y="500.5" width="12" height="0.9"/><rect x="708" y="504.1" width="12" height="0.9"/></g><ellipse cx="714" cy="515.5" rx="7" ry="2.2" fill="#6a6a6a"/><ellipse cx="714" cy="519.1" rx="7" ry="2.2" fill="#6a6a6a"/><ellipse cx="714" cy="522.7" rx="7" ry="2.2" fill="#6a6a6a"/><ellipse cx="714" cy="526.3" rx="7" ry="2.2" fill="#6a6a6a"/><g fill="#fff" opacity="0.9"><rect x="708" y="516.9" width="12" height="0.9"/><rect x="708" y="520.5" width="12" height="0.9"/><rect x="708" y="524.1" width="12" height="0.9"/></g><ellipse cx="714" cy="535.5" rx="7" ry="2.2" fill="#6a6a6a"/><ellipse cx="714" cy="539.1" rx="7" ry="2.2" fill="#6a6a6a"/><ellipse cx="714" cy="542.7" rx="7" ry="2.2" fill="#6a6a6a"/><ellipse cx="714" cy="546.3" rx="7" ry="2.2" fill="#6a6a6a"/><g fill="#fff" opacity="0.9"><rect x="708" y="536.9" width="12" height="0.9"/><rect x="708" y="540.5" width="12" height="0.9"/><rect x="708" y="544.1" width="12" height="0.9"/></g><ellipse cx="714" cy="555.5" rx="7" ry="2.2" fill="#6a6a6a"/><ellipse cx="714" cy="559.1" rx="7" ry="2.2" fill="#6a6a6a"/><ellipse cx="714" cy="562.7" rx="7" ry="2.2" fill="#6a6a6a"/><ellipse cx="714" cy="566.3" rx="7" ry="2.2" fill="#6a6a6a"/><g fill="#fff" opacity="0.9"><rect x="708" y="556.9" width="12" height="0.9"/><rect x="708" y="560.5" width="12" height="0.9"/><rect x="708" y="564.1" width="12" height="0.9"/></g><ellipse cx="714" cy="575.5" rx="7" ry="2.2" fill="#6a6a6a"/><ellipse cx="714" cy="579.1" rx="7" ry="2.2" fill="#6a6a6a"/><ellipse cx="714" cy="582.7" rx="7" ry="2.2" fill="#6a6a6a"/><ellipse cx="714" cy="586.3" rx="7" ry="2.2" fill="#6a6a6a"/><g fill="#fff" opacity="0.9"><rect x="708" y="576.9" width="12" height="0.9"/><rect x="708" y="580.5" width="12" height="0.9"/><rect x="708" y="584.1" width="12" height="0.9"/></g><path d="M691 598.5l4 4 4-4" stroke="#555" stroke-width="1.2" fill="none"/><ellipse cx="714" cy="595.5" rx="7" ry="2.2" fill="#1e7e34"/><ellipse cx="714" cy="599.1" rx="7" ry="2.2" fill="#1e7e34"/><ellipse cx="714" cy="602.7" rx="7" ry="2.2" fill="#1e7e34"/><ellipse cx="714" cy="606.3" rx="7" ry="2.2" fill="#1e7e34"/><g fill="#fff" opacity="0.9"><rect x="708" y="596.9" width="12" height="0.9"/><rect x="708" y="600.5" width="12" height="0.9"/><rect x="708" y="604.1" width="12" height="0.9"/></g><path d="M705 618.5l4 4 4-4" stroke="#555" stroke-width="1.2" fill="none"/><rect x="720.5" y="614.0" width="15" height="14" rx="1.5" fill="#fff" stroke="#3a87c8"/><rect x="720" y="613.5" width="16" height="3" fill="#3a87c8"/><path d="M725.5 616.5v11M730.5 616.5v11M720 620.5h16M720 624.0h16" stroke="#5aa0dc"/><rect x="734.5" y="634.0" width="15" height="14" rx="1.5" fill="#fff" stroke="#3a87c8"/><rect x="734" y="633.5" width="16" height="3" fill="#3a87c8"/><path d="M739.5 636.5v11M744.5 636.5v11M734 640.5h16M734 644.0h16" stroke="#5aa0dc"/><rect x="734.5" y="654.0" width="15" height="14" rx="1.5" fill="#fff" stroke="#3a87c8"/><rect x="734" y="653.5" width="16" height="3" fill="#3a87c8"/><path d="M739.5 656.5v11M744.5 656.5v11M734 660.5h16M734 664.0h16" stroke="#5aa0dc"/><rect x="734.5" y="674.0" width="15" height="14" rx="1.5" fill="#fff" stroke="#3a87c8"/><rect x="734" y="673.5" width="16" height="3" fill="#3a87c8"/><path d="M739.5 676.5v11M744.5 676.5v11M734 680.5h16M734 684.0h16" stroke="#5aa0dc"/><rect x="734.5" y="694.0" width="15" height="14" rx="1.5" fill="#fff" stroke="#3a87c8"/><rect x="734" y="693.5" width="16" height="3" fill="#3a87c8"/><path d="M739.5 696.5v11M744.5 696.5v11M734 700.5h16M734 704.0h16" stroke="#5aa0dc"/><rect x="734.5" y="714.0" width="15" height="14" rx="1.5" fill="#fff" stroke="#3a87c8"/><rect x="734" y="713.5" width="16" height="3" fill="#3a87c8"/><path d="M739.5 716.5v11M744.5 716.5v11M734 720.5h16M734 724.0h16" stroke="#5aa0dc"/><rect x="734.5" y="734.0" width="15" height="14" rx="1.5" fill="#fff" stroke="#3a87c8"/><rect x="734" y="733.5" width="16" height="3" fill="#3a87c8"/><path d="M739.5 736.5v11M744.5 736.5v11M734 740.5h16M734 744.0h16" stroke="#5aa0dc"/><rect x="734.5" y="754.0" width="15" height="14" rx="1.5" fill="#fff" stroke="#3a87c8"/><rect x="734" y="753.5" width="16" height="3" fill="#3a87c8"/><path d="M739.5 756.5v11M744.5 756.5v11M734 760.5h16M734 764.0h16" stroke="#5aa0dc"/><path d="M707 776.5l4 4-4 4" stroke="#777" stroke-width="1.2" fill="none"/><rect x="720.5" y="773.0" width="15" height="12" fill="#fff" stroke="#3a87c8"/><rect x="720" y="772.5" width="16" height="3" fill="#3a87c8"/><circle cx="724" cy="785.5" r="2.8" fill="#fff" stroke="#444" stroke-width="1.3"/><circle cx="732" cy="785.5" r="2.8" fill="#fff" stroke="#444" stroke-width="1.3"/><path d="M707 796.5l4 4-4 4" stroke="#777" stroke-width="1.2" fill="none"/><text x="720" y="805.5" font-family="Liberation Serif" font-style="italic" font-size="15" fill="#2f6fb3">f</text><text x="727" y="807.5" font-family="Liberation Serif" font-style="italic" font-size="12" fill="#2f6fb3">x</text><path d="M707 816.5l4 4-4 4" stroke="#777" stroke-width="1.2" fill="none"/><circle cx="728" cy="821.5" r="6.5" fill="#fff" stroke="#6aa84f" stroke-width="1.6"/><path d="M728 817.5v4h3" stroke="#333" fill="none"/><path d="M707 836.5l4 4-4 4" stroke="#777" stroke-width="1.2" fill="none"/><rect x="726" y="832.5" width="10" height="10" fill="#e0704a"/><rect x="720" y="837.5" width="11" height="11" fill="#3a87c8"/><path d="M720 841.5h11M720 845.0h11M724 839.5v9M727.5 839.5v9" stroke="#fff" stroke-width=".8"/><path d="M707 856.5l4 4-4 4" stroke="#777" stroke-width="1.2" fill="none"/><path d="M722.5 853.0h8l3 3v12h-11z" fill="#fff" stroke="#777"/><rect x="725" y="862.5" width="2" height="4" fill="#e0704a"/><rect x="728" y="860.5" width="2" height="6" fill="#3a87c8"/><path d="M707 876.5l4 4-4 4" stroke="#777" stroke-width="1.2" fill="none"/><rect x="722" y="872.5" width="13" height="15" rx="2" fill="#777"/><circle cx="728.5" cy="879.5" r="3" fill="none" stroke="#ddd"/><rect x="722" y="885.5" width="13" height="2" fill="#555"/><ellipse cx="714" cy="895.5" rx="7" ry="2.2" fill="#6a6a6a"/><ellipse cx="714" cy="899.1" rx="7" ry="2.2" fill="#6a6a6a"/><ellipse cx="714" cy="902.7" rx="7" ry="2.2" fill="#6a6a6a"/><ellipse cx="714" cy="906.3" rx="7" ry="2.2" fill="#6a6a6a"/><g fill="#fff" opacity="0.9"><rect x="708" y="896.9" width="12" height="0.9"/><rect x="708" y="900.5" width="12" height="0.9"/><rect x="708" y="904.1" width="12" height="0.9"/></g><ellipse cx="714" cy="915.5" rx="7" ry="2.2" fill="#6a6a6a"/><ellipse cx="714" cy="919.1" rx="7" ry="2.2" fill="#6a6a6a"/><ellipse cx="714" cy="922.7" rx="7" ry="2.2" fill="#6a6a6a"/><ellipse cx="714" cy="926.3" rx="7" ry="2.2" fill="#6a6a6a"/><g fill="#fff" opacity="0.9"><rect x="708" y="916.9" width="12" height="0.9"/><rect x="708" y="920.5" width="12" height="0.9"/><rect x="708" y="924.1" width="12" height="0.9"/></g>
<path d="M683 304a5 5 0 0 1 8-4" stroke="#e2582c" stroke-width="1.8" fill="none"/><path d="M691 300a4 4 0 0 1 5 3" stroke="#4caf50" stroke-width="1.6" fill="none"/><circle cx="690" cy="307" r="5.2" fill="none" stroke="#3b8fe0" stroke-width="1.6"/><path d="M685 309a5 5 0 0 1 0-4" stroke="#e3a23a" stroke-width="1.6" fill="none"/>
<rect x="1514" y="305" width="11" height="1" fill="#555"/>
<rect x="1560.5" y="299.5" width="10" height="10" fill="none" stroke="#555"/>
<path d="M1606 300l10 10M1616 300l-10 10" stroke="#666" stroke-width="1"/>
<ellipse cx="1621.5" cy="330.5" rx="5" ry="5.5" fill="#fff"/><rect x="1619.5" y="334" width="4" height="4" fill="#fff"/><path d="M1610 346c1-6 5-8.5 11.5-8.5s10.5 2.5 11.5 8.5z" fill="#fff"/>
<!-- connect -->
<path d="M701 380l6-6M705 372l8-8 6 6-8 8z M716 361l4-4M721 366l4-4" stroke="#5a5a5a" stroke-width="3.5" fill="#5a5a5a"/>
<circle cx="723" cy="375" r="6" fill="#2f7fd0"/><path d="M723 371.5v7M719.5 375h7" stroke="#fff" stroke-width="1.4"/>
<path d="M747 378h7l-3.5 3z" fill="#111"/>
<!-- new query -->
<rect x="782" y="356" width="17" height="17" rx="1.5" fill="#e0704a"/><path d="M782 361h17M782 366h17M788 361v12M794 361v12" stroke="#fff" stroke-width="1"/>
<rect x="775" y="366" width="17" height="16" rx="1.5" fill="#3a87c8"/><path d="M776 370h15M776 374.5h15M776 378.5h15M781 370v11M786 370v11" stroke="#fff" stroke-width="1"/>
<circle cx="800" cy="378" r="6" fill="#2f7fd0"/><path d="M800 374.5v7M796.5 378h7" stroke="#fff" stroke-width="1.4"/>
<!-- table -->
<rect x="882.5" y="356.5" width="25" height="24" rx="2" fill="#fff" stroke="#3a87c8" stroke-width="1.5"/><rect x="882" y="356" width="26" height="5" rx="1.5" fill="#3a87c8"/><path d="M891 361v20M899.5 361v20M882 367h26M882 374h26" stroke="#5aa0dc" stroke-width="1.3"/>
<!-- view -->
<rect x="952.5" y="356.5" width="25" height="22" rx="2" fill="#fff" stroke="#3a87c8" stroke-width="1.5"/><rect x="952" y="356" width="26" height="5" fill="#3a87c8"/><path d="M961 361v17M969.5 361v17M952 367h26M952 373h26" stroke="#5aa0dc" stroke-width="1.3"/><circle cx="959" cy="378" r="4.5" fill="#fff" stroke="#444" stroke-width="2"/><circle cx="972" cy="378" r="4.5" fill="#fff" stroke="#444" stroke-width="2"/>
<!-- func -->
<text x="1020" y="378" font-family="Liberation Serif" font-style="italic" font-size="26" fill="#555">f</text><text x="1031" y="380" font-family="Liberation Serif" font-style="italic" font-size="15" fill="#555">(x)</text>
<!-- event -->
<circle cx="1104" cy="370" r="11" fill="#fff" stroke="#6aa84f" stroke-width="2.5"/><path d="M1096 358l-3 3M1112 358l3 3" stroke="#6aa84f" stroke-width="3"/><path d="M1104 363v7l5 2" stroke="#333" stroke-width="1.3" fill="none"/>
<!-- user -->
<path d="M1163 382c0-8 5-11 12-11s12 3 12 11z" fill="#f0a640"/><circle cx="1175" cy="363" r="7" fill="#fde0b9"/><path d="M1168 362a7 7 0 0 1 14 0c-3-3.5-11-3.5-14 0z" fill="#b35c1e"/>
<!-- query -->
<rect x="1240" y="356" width="17" height="17" rx="1" fill="#e0704a"/><path d="M1240 361h17M1240 366h17M1246 361v12M1251 361v12" stroke="#fff"/><rect x="1233" y="366" width="17" height="16" rx="1" fill="#3a87c8"/><path d="M1234 370h15M1234 374h15M1234 378h15M1238 370v12M1243 370v12" stroke="#fff"/>
<!-- report -->
<path d="M1303.5 356.5h17l4 4v20h-21z" fill="#fff" stroke="#888"/><path d="M1306 361h11M1306 364h13M1306 367h13M1306 370h13" stroke="#999"/><rect x="1308" y="373" width="3" height="6" fill="#e0704a"/><rect x="1313" y="376" width="3" height="3" fill="#3a87c8"/><rect x="1317" y="371" width="3" height="8" fill="#3a87c8"/>
<!-- backup -->
<rect x="1374" y="356" width="21" height="26" rx="2.5" fill="#7d7d7d"/><rect x="1374" y="378" width="21" height="4" rx="1" fill="#5b5b5b"/><path d="M1380 368a5 5 0 1 0 2-4" stroke="#eee" stroke-width="1.8" fill="none"/><path d="M1379 363l4 0-1 3z" fill="#eee"/>
<!-- autorun -->
<rect x="1440.5" y="357.5" width="9" height="9" fill="#fff" stroke="#6aa84f" stroke-width="1.5"/><path d="M1442 362l2 2 4-4" stroke="#6aa84f" stroke-width="1.5" fill="none"/>
<rect x="1440.5" y="370.5" width="9" height="9" fill="#fff" stroke="#6aa84f" stroke-width="1.5"/><path d="M1442 375l2 2 4-4" stroke="#6aa84f" stroke-width="1.5" fill="none"/>
<path d="M1453 359h11M1453 363h9" stroke="#999" stroke-width="1.5"/><circle cx="1459" cy="376" r="6.5" fill="#fff" stroke="#555" stroke-width="1.3"/><path d="M1459 372v4h3" stroke="#555" fill="none"/>
<!-- model -->
<path d="M1513.5 356.5h18l4 4v21h-22z" fill="#fff" stroke="#777"/><rect x="1513" y="356" width="19" height="4" fill="#3a87c8"/><path d="M1531 356l5 5h-5z" fill="#6aaee0"/><rect x="1517.5" y="364.5" width="6" height="5" fill="none" stroke="#555"/><rect x="1526.5" y="368.5" width="6" height="5" fill="none" stroke="#555"/><rect x="1517.5" y="373.5" width="6" height="5" fill="none" stroke="#555"/>
<!-- tab icons -->
<path d="M1043 417l-5 7 5 7" stroke="#999" stroke-width="1.2" fill="none"/>
<rect x="1055.5" y="417.5" width="15" height="14" rx="1.5" fill="#fff" stroke="#3a87c8"/><rect x="1055" y="417" width="16" height="3" fill="#3a87c8"/><path d="M1060.5 420v11M1065.5 420v11M1055 424h16M1055 427.5h16" stroke="#5aa0dc"/>
<rect x="1204.5" y="417.5" width="15" height="14" rx="1.5" fill="#fff" stroke="#3a87c8"/><rect x="1204" y="417" width="16" height="3" fill="#3a87c8"/><path d="M1209.5 420v11M1214.5 420v11M1204 424h16M1204 427.5h16" stroke="#5aa0dc"/>
<rect x="1354.5" y="417.5" width="15" height="14" rx="1.5" fill="#fff" stroke="#3a87c8"/><rect x="1354" y="417" width="16" height="3" fill="#3a87c8"/><path d="M1359.5 420v11M1364.5 420v11M1354 424h16M1354 427.5h16" stroke="#5aa0dc"/>
<path d="M1469 418l6 6-6 6" stroke="#9a8f9a" stroke-width="2.5" fill="none"/>
<circle cx="1546" cy="424" r="7" fill="none" stroke="#2f8ae0" stroke-width="1.6"/><rect x="1545" y="423" width="2" height="5" fill="#2f8ae0"/><rect x="1545" y="419.5" width="2" height="2" fill="#2f8ae0"/>
<rect x="1564.5" y="417.5" width="13" height="13" fill="#fff" stroke="#555"/><text x="1566" y="427" font-size="5" font-weight="bold" fill="#444" font-family="Liberation Sans">DDL</text>
<!-- second toolbar icons -->
<ellipse cx="974" cy="450" rx="6.5" ry="2.5" fill="none" stroke="#777"/><path d="M967.5 450v10a6.5 2.5 0 0 0 7 2.5M980.5 450v5M967.5 455a6.5 2.5 0 0 0 6 2.5" stroke="#777" fill="none"/><path d="M974 455l7 4-7 4z" fill="#4caf50"/>
<path d="M1059.5 447.5h8l4 4v11h-12z" fill="#fff" stroke="#666"/><path d="M1062 453h6M1062 456h7M1062 459h7" stroke="#3a87c8"/>
<path d="M1108 454h6l-3 3z" fill="#111"/>
<path d="M1122 448h15l-5 7v7l-5 2v-9z" fill="#2f8ae0"/>
<path d="M1179 448v14M1176 459l3 3 3-3" stroke="#2f8ae0" stroke-width="1.5" fill="none"/><path d="M1184 449h5M1184 453h5M1184 457h5M1184 461h5" stroke="#666"/>
<rect x="1241.5" y="447.5" width="14" height="14" fill="#fff" stroke="#3a87c8"/><rect x="1241" y="447" width="15" height="3" fill="#3a87c8"/><path d="M1246 450v11M1250.5 450v11M1241 454h15M1241 457.5h15" stroke="#5aa0dc"/><path d="M1256 463c0-3-2-5-5-5l2-2M1251 458l2 2" stroke="#4caf50" stroke-width="1.8" fill="none"/>
<rect x="1294.5" y="447.5" width="14" height="14" fill="#fff" stroke="#3a87c8"/><rect x="1294" y="447" width="15" height="3" fill="#3a87c8"/><path d="M1299 450v11M1303.5 450v11M1294 454h15M1294 457.5h15" stroke="#5aa0dc"/><path d="M1302 456c0 3 2 5 5 5l-2 2M1307 461l-2-2" stroke="#e3a23a" stroke-width="1.8" fill="none"/>
<!-- grid: row pointer and scroll arrows -->
<path d="M964 495l6 6-6 6z" fill="#111"/>
<path d="M1468 481l4-4 4 4" stroke="#555" stroke-width="1.5" fill="none"/>
<path d="M1468 889l4 4 4-4" stroke="#555" stroke-width="1.5" fill="none"/>
<path d="M972 904l-4 4 4 4" stroke="#555" stroke-width="1.5" fill="none"/>
<path d="M1453 904l4 4-4 4" stroke="#555" stroke-width="1.5" fill="none"/>
<path d="M1621 449l4-4 4 4" stroke="#555" stroke-width="1.5" fill="none"/>
<path d="M1621 928l4 4 4-4" stroke="#555" stroke-width="1.5" fill="none"/>
<!-- info big table -->
<rect x="1499" y="452" width="51" height="48" rx="4" fill="#fff" stroke="#3a87c8" stroke-width="2"/><rect x="1498" y="451" width="53" height="13" rx="4" fill="#3a87c8"/><rect x="1498" y="458" width="53" height="6" fill="#3a87c8"/><path d="M1515 464v35M1531.5 464v35M1499 476h51M1499 488h51" stroke="#4a98dc" stroke-width="2"/>
<!-- bottom toolbar icons -->
<path d="M968 928h10M973 923v10" stroke="#111" stroke-width="2.5"/>
<path d="M992 928h10" stroke="#111" stroke-width="2.5"/>
<path d="M1016 928l3 3 5-6" stroke="#bcc3c3" stroke-width="2.2" fill="none"/>
<path d="M1041 924l8 8M1049 924l-8 8" stroke="#bcc3c3" stroke-width="2.2"/>
<path d="M1073 925a5 5 0 1 0 0.5 5" stroke="#111" stroke-width="2" fill="none"/><path d="M1070 922l5 2-4 3z" fill="#111"/>
<circle cx="1093" cy="928" r="4.5" fill="none" stroke="#111" stroke-width="2"/><path d="M1090 925l6 6" stroke="#111" stroke-width="2"/>
<path d="M1284 922v12M1294 922l-8 6 8 6z" fill="#111" stroke="#111" stroke-width="1.5"/>
<path d="M1307 928h10M1312 923l-5 5 5 5" stroke="#111" stroke-width="2.2" fill="#111"/>
<path d="M1356 928h10M1361 923l5 5-5 5" stroke="#111" stroke-width="2.2" fill="#111"/>
<path d="M1390 922v12M1380 922l8 6-8 6z" fill="#111" stroke="#111" stroke-width="1.5"/>
<circle cx="1410" cy="928" r="4" fill="none" stroke="#111" stroke-width="3" stroke-dasharray="2 1.3"/><circle cx="1410" cy="928" r="3" fill="none" stroke="#111" stroke-width="1.6"/>
<rect x="1435.5" y="921.5" width="13" height="13" fill="none" stroke="#555"/><path d="M1440 922v12M1444 922v12M1436 926h12M1436 930h12" stroke="#555"/>
<rect x="1458.5" y="921.5" width="13" height="13" fill="none" stroke="#555"/><path d="M1460 925h10M1460 928h10M1460 931h10" stroke="#555"/>
<!-- status buttons -->
<rect x="1589.5" y="944.5" width="12" height="12" fill="none" stroke="#444"/><rect x="1591" y="946" width="3" height="9" fill="#444"/>
<rect x="1613.5" y="944.5" width="12" height="12" fill="none" stroke="#444"/><rect x="1621" y="946" width="3" height="9" fill="#444"/>
</svg>
</div><!-- NV_END -->
</body></html>
